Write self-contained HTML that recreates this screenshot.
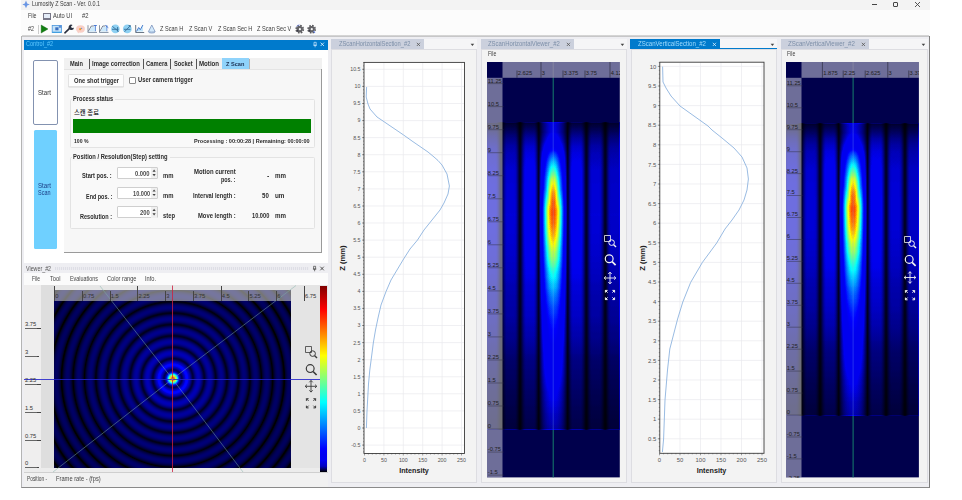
<!DOCTYPE html><html><head><meta charset="utf-8"><title>Lumosity Z Scan</title><style>
*{box-sizing:border-box;margin:0;padding:0}
html,body{width:962px;height:500px;overflow:hidden;background:#fff}
body{font-family:"Liberation Sans","Noto Sans CJK KR",sans-serif;font-size:6px;color:#222;position:relative}
.a{position:absolute}
.t{position:absolute;white-space:nowrap;line-height:1}
svg{position:absolute;overflow:visible}
#win{position:absolute;left:21px;top:0;width:909px;height:487.800px;background:#eeeef2;border-left:1px solid #b4b4b4;border-right:1px solid #7c7c7c;border-bottom:1px solid #8a8a8a}
</style></head><body>
<div id="win"></div>
<div class="a" style="left:21px;top:0px;width:909px;height:10px;background:#f3f3f3;"></div>
<div class="a" style="left:21px;top:10px;width:909px;height:26px;background:#fcfcfc;"></div>
<div class="a" style="left:22px;top:35.3px;width:907px;height:1.8px;background:linear-gradient(180deg,#e6e6e6,#bcbcbc 60%,#d8d8dc);"></div>
<svg style="left:22px;top:0" width="8" height="9" viewBox="0 0 8 9"><path d="M4 .6 5.2 3.4 7.8 4.6 5.2 5.6 4 8.2 2.8 5.6 .3 4.6 2.8 3.4Z" fill="#6a96e4"/></svg>
<div class="t" style="font-size:6.9px;color:#3a3a3a;left:31.50px;top:1.15px;transform-origin:0 50%;transform:scaleX(0.785);">Lumosity Z Scan - Ver. 0.0.1</div>
<div class="t" style="font-size:6.9px;color:#3a3a3a;left:27.50px;top:12.75px;transform-origin:0 50%;transform:scaleX(0.764);">File</div>
<div class="t" style="font-size:6.9px;color:#3a3a3a;left:53.00px;top:12.75px;transform-origin:0 50%;transform:scaleX(0.826);">Auto UI</div>
<div class="t" style="font-size:6.9px;color:#3a3a3a;left:82.00px;top:12.75px;transform-origin:0 50%;transform:scaleX(0.847);">#2</div>
<div class="a" style="left:43px;top:12.5px;width:8px;height:7px;border:1px solid #778;background:#e4ecf8;border-bottom-width:2px"></div>
<div class="t" style="font-size:6.9px;color:#3a3a3a;left:27.70px;top:25.55px;transform-origin:0 50%;transform:scaleX(0.782);">#2</div>
<div class="a" style="left:37.5px;top:24.5px;width:0.6px;height:9px;background:#ccc;"></div>
<div class="t" style="font-size:6.9px;color:#3a3a3a;left:159.70px;top:25.55px;transform-origin:0 50%;transform:scaleX(0.810);">Z Scan H</div>
<div class="t" style="font-size:6.9px;color:#3a3a3a;left:188.70px;top:25.55px;transform-origin:0 50%;transform:scaleX(0.818);">Z Scan V</div>
<div class="t" style="font-size:6.9px;color:#3a3a3a;left:217.50px;top:25.55px;transform-origin:0 50%;transform:scaleX(0.808);">Z Scan Sec H</div>
<div class="t" style="font-size:6.9px;color:#3a3a3a;left:256.90px;top:25.55px;transform-origin:0 50%;transform:scaleX(0.813);">Z Scan Sec V</div>
<svg style="left:40px;top:24px" width="120" height="10" viewBox="40 24 120 10"><path d="M41.200 25 48 29 41.200 33Z" fill="#118011" stroke="#0a5a0a" stroke-width="0.400"/><rect x="52.200" y="25.500" width="9.300" height="7" fill="#c4e2f8" stroke="#4a96dc" stroke-width="0.800"/><path d="M52.200 32.300h9.300" stroke="#3f9fe0" stroke-width="1.200"/><rect x="55.300" y="27.300" width="3.200" height="3" fill="#3a6fc0"/><rect x="58.800" y="25.200" width="2.600" height="2.600" fill="#5a8fd8"/><path d="M64.900 32.800 69.300 28.600" stroke="#2a3040" stroke-width="1.600" stroke-linecap="round"/><path d="M72.600 24.900 a2.700 2.700 0 1 0 1.400 2.800 l-2.200 .3 -.8 -1.600z" fill="#2a3040"/><ellipse cx="80.500" cy="29" rx="4.400" ry="3.700" fill="#f9cfc6"/><circle cx="80.200" cy="29.200" r="1.100" fill="#f0a030"/><circle cx="81.600" cy="28.300" r="0.600" fill="#5a8fe0"/><path d="M78 32.200l.6 1" stroke="#f4b0a4" stroke-width="0.700"/><path d="M88.300 31.400 91.300 26h2.500" stroke="#56657c" stroke-width="0.800" fill="none"/><path d="M87.600 32.400h9.400" stroke="#8090a4" stroke-width="1"/><path d="M88 25.200v6.800" stroke="#56657c" stroke-width="0.700"/><path d="M95.300 25.300v6M93.800 25.500h3" stroke="#3a6fd0" stroke-width="0.900"/><path d="M89 31.500 91.600 27h3.200v4.500z" fill="#bfe4fa" opacity=".8"/><path d="M99.800 31.400 102.800 26h2.500" stroke="#56657c" stroke-width="0.800" fill="none"/><path d="M99.100 32.400h9.400" stroke="#8090a4" stroke-width="1"/><path d="M99.500 25.200v6.800" stroke="#56657c" stroke-width="0.700"/><path d="M106.800 25.300v6M105.300 25.300l3 2.400" stroke="#3a6fd0" stroke-width="0.900"/><path d="M100.500 31.500 103.100 27h3.200v4.500z" fill="#bfe4fa" opacity=".8"/><circle cx="115.400" cy="28.900" r="4.300" fill="#8ed0f2"/><path d="M112.300 26.300l6.300 5.200M112 29.300h6.500M117.600 27v4.600" stroke="#35709c" stroke-width="0.900" fill="none"/><circle cx="127.300" cy="28.900" r="4.400" fill="#8ed0f2"/><path d="M124.500 31.800l5.800-6.200M124 29.300h6.500M128.500 25.500l1.800 .1-.1 1.800" stroke="#35709c" stroke-width="0.900" fill="none"/><path d="M135.700 25v7.500h8.500" stroke="#5a6878" stroke-width="0.900" fill="none"/><path d="M136.500 31.500l2.200-4 1.600 2.200 2.600-4.700v6.500z" fill="#bfe4fa"/><path d="M136.500 31.500l2.200-4 1.600 2.200 2.600-4.700" stroke="#3a70c8" stroke-width="0.900" fill="none"/><path d="M151.800 25 155.200 31.800a3.400 1.200 0 0 1-6.800 0z" fill="#d2e9fb" stroke="#7088b4" stroke-width="0.700"/><path d="M148.600 31.200a3.300 1 0 0 0 6.400 0" stroke="#7088b4" stroke-width="0.500" fill="none"/></svg>
<svg style="left:294px;top:24px" width="24" height="10" viewBox="294 24 24 10"><circle cx="299.700" cy="29.200" r="3.500" fill="none" stroke="#5a5a5e" stroke-width="1.800" stroke-dasharray="1.600 1.150"/><circle cx="299.700" cy="29.200" r="3.100" fill="#626266"/><circle cx="299.900" cy="29.200" r="1.100" fill="#f4f4f4"/><circle cx="297.600" cy="31" r="0.700" fill="#223"/><path d="M296.300 26.600l1.600-1.300 1.800-.3" stroke="#6a7fd8" stroke-width="0.800" fill="none"/><circle cx="311.600" cy="29.200" r="3.500" fill="none" stroke="#5a5a5e" stroke-width="1.800" stroke-dasharray="1.600 1.150"/><circle cx="311.600" cy="29.200" r="3.100" fill="#626266"/><circle cx="311.800" cy="29.200" r="1.100" fill="#f4f4f4"/><circle cx="309.500" cy="31" r="0.700" fill="#223"/><path d="M313.600 31l1.200 1.800" stroke="#6a86e0" stroke-width="1.200"/></svg>
<div class="a" style="left:872px;top:4px;width:5px;height:0.9px;background:#444;"></div>
<div class="a" style="left:893px;top:1.5px;width:5px;height:5px;border:0.9px solid #444;border-radius:1px"></div>
<svg style="left:914px;top:1px" width="7" height="7"><path d="M1 1 6 6M6 1 1 6" stroke="#444" stroke-width="0.9"/></svg>
<div class="a" style="left:24px;top:39.5px;width:303.5px;height:223px;background:#ffffff;"></div>
<div class="a" style="left:24px;top:39.5px;width:303.5px;height:10.2px;background:#007acc;"></div>
<div class="t" style="font-size:6.6px;color:#5cc8ff;left:26.40px;top:41.30px;transform-origin:0 50%;transform:scaleX(0.842);">Control_#2</div>
<svg style="left:312px;top:41px" width="14" height="8" viewBox="312 41 14 8"><path d="M314 42.300h2.200v3h-2.200zM313.400 45.300h3.400M315.100 45.300v2" stroke="#cfeaff" stroke-width="0.700" fill="none"/><path d="M320.600 42.600 324 46M324 42.600 320.600 46" stroke="#e8f6ff" stroke-width="0.800"/></svg>
<div class="a" style="left:33px;top:59.500px;width:25px;height:65px;background:#fff;border:1px solid #8392b0;border-radius:2px"></div>
<div class="t" style="font-size:6.8px;color:#333;left:38.20px;top:90.40px;transform-origin:0 50%;transform:scaleX(0.898);">Start</div>
<div class="a" style="left:33.500px;top:130px;width:23.500px;height:118.800px;background:#6fd0ff;border-radius:1.500px"></div>
<div class="t" style="font-size:6.8px;color:#1c3f86;left:38.00px;top:182.60px;transform-origin:0 50%;transform:scaleX(0.905);">Start</div>
<div class="t" style="font-size:6.8px;color:#1c3f86;left:38.00px;top:190.10px;transform-origin:0 50%;transform:scaleX(0.806);">Scan</div>
<div class="a" style="left:64px;top:58px;width:257.5px;height:194px;background:#f7f7f7;"></div>
<div class="a" style="left:64px;top:58px;width:257.5px;height:11px;background:#f1f1f1;"></div>
<div class="a" style="left:321px;top:69px;width:1px;height:183.5px;background:#9a9a9a;"></div>
<div class="a" style="left:64px;top:251.5px;width:258px;height:1px;background:#9a9a9a;"></div>
<div class="a" style="left:64px;top:69px;width:257px;height:0.6px;background:#e4e4e4;"></div>
<div class="t" style="font-size:6.3px;color:#2b2b2b;font-weight:bold;left:70.00px;top:60.65px;transform-origin:0 50%;transform:scaleX(0.899);">Main</div>
<div class="t" style="font-size:6.3px;color:#2b2b2b;font-weight:bold;left:92.20px;top:60.65px;transform-origin:0 50%;transform:scaleX(0.942);">Image correction</div>
<div class="t" style="font-size:6.3px;color:#2b2b2b;font-weight:bold;left:146.30px;top:60.65px;transform-origin:0 50%;transform:scaleX(0.926);">Camera</div>
<div class="t" style="font-size:6.3px;color:#2b2b2b;font-weight:bold;left:173.70px;top:60.65px;transform-origin:0 50%;transform:scaleX(0.905);">Socket</div>
<div class="t" style="font-size:6.3px;color:#2b2b2b;font-weight:bold;left:198.90px;top:60.65px;transform-origin:0 50%;transform:scaleX(0.974);">Motion</div>
<div class="a" style="left:88.8px;top:59px;width:0.8px;height:9.5px;background:#555;"></div>
<div class="a" style="left:143.29999999999998px;top:59px;width:0.8px;height:9.5px;background:#555;"></div>
<div class="a" style="left:170.29999999999998px;top:59px;width:0.8px;height:9.5px;background:#555;"></div>
<div class="a" style="left:195.89999999999998px;top:59px;width:0.8px;height:9.5px;background:#555;"></div>
<div class="a" style="left:222.2px;top:57.8px;width:27px;height:11.5px;background:#8fd3fb;"></div>
<div class="a" style="left:249.2px;top:58.5px;width:0.8px;height:10.5px;background:#b0b0b0;"></div>
<div class="t" style="font-size:6.0px;color:#1b2f52;font-weight:bold;left:225.70px;top:60.90px;transform-origin:0 50%;transform:scaleX(0.930);">Z Scan</div>
<div class="a" style="left:68.300px;top:73.800px;width:56.100px;height:13.500px;background:#fdfdfd;border:0.7px solid #e2e2e2;border-radius:1.500px;box-shadow:0 0.500px 0.500px #d8d8d8"></div>
<div class="t" style="font-size:6.3px;color:#2b2b2b;font-weight:bold;left:73.50px;top:77.65px;transform-origin:0 50%;transform:scaleX(0.920);">One shot trigger</div>
<div class="a" style="left:129.300px;top:77.400px;width:6.300px;height:6.300px;background:#fff;border:0.7px solid #8a8a8a;border-radius:1px"></div>
<div class="t" style="font-size:6.3px;color:#2b2b2b;font-weight:bold;left:138.00px;top:77.45px;transform-origin:0 50%;transform:scaleX(0.924);">User camera trigger</div>
<div class="a" style="left:69.500px;top:99px;width:245px;height:49px;border:0.7px solid #e3e3e3;border-radius:1.500px;background:#f9f9f9"></div>
<div class="a" style="left:72px;top:95px;width:43px;height:8px;background:#f7f7f7;"></div>
<div class="t" style="font-size:6.3px;color:#2b2b2b;font-weight:bold;left:73.40px;top:95.85px;transform-origin:0 50%;transform:scaleX(0.895);">Process status</div>
<div class="t" style="font-size:6.3px;color:#111;left:74.00px;top:109.55px;font-weight:500;">스캔 종료</div>
<div class="a" style="left:73.4px;top:119.2px;width:238.1px;height:14px;background:#008000;"></div>
<div class="t" style="font-size:6.2px;color:#2b2b2b;font-weight:bold;left:74.00px;top:137.50px;transform-origin:0 50%;transform:scaleX(0.825);">100 %</div>
<div class="t" style="font-size:6.2px;color:#2b2b2b;font-weight:bold;left:193.90px;top:137.50px;transform-origin:0 50%;transform:scaleX(0.897);">Processing : 00:00:28 | Remaining: 00:00:00</div>
<div class="a" style="left:69.500px;top:156.500px;width:245px;height:72px;border:0.7px solid #e3e3e3;border-radius:1.500px;background:#f9f9f9"></div>
<div class="a" style="left:72px;top:152.5px;width:98px;height:8px;background:#f7f7f7;"></div>
<div class="t" style="font-size:6.3px;color:#2b2b2b;font-weight:bold;left:73.40px;top:154.05px;transform-origin:0 50%;transform:scaleX(0.919);">Position / Resolution(Step) setting</div>
<div class="a" style="left:117px;top:167.2px;width:41px;height:11.7px;background:#fff;border:0.7px solid #cfcfcf;border-radius:1px"></div>
<div class="a" style="left:151px;top:167.89999999999998px;width:6.300px;height:10.3px;background:#f0f0f0"></div>
<div class="t" style="font-size:7.0px;color:#4a4a4a;font-weight:bold;left:135.10px;top:169.75px;transform-origin:0 50%;transform:scaleX(0.833);">0.000</div>
<svg style="left:151px;top:167.2px" width="6" height="11.7" viewBox="0 0 6 11.500"><path d="M1.500 4.600 3.100 2.400 4.700 4.600zM1.500 6.900 3.100 9.100 4.700 6.900z" fill="#444"/></svg>
<div class="a" style="left:117px;top:187.3px;width:41px;height:11.5px;background:#fff;border:0.7px solid #cfcfcf;border-radius:1px"></div>
<div class="a" style="left:151px;top:188.0px;width:6.300px;height:10.1px;background:#f0f0f0"></div>
<div class="t" style="font-size:7.0px;color:#4a4a4a;font-weight:bold;left:132.50px;top:189.75px;transform-origin:0 50%;transform:scaleX(0.803);">10.000</div>
<svg style="left:151px;top:187.3px" width="6" height="11.5" viewBox="0 0 6 11.500"><path d="M1.500 4.600 3.100 2.400 4.700 4.600zM1.500 6.900 3.100 9.100 4.700 6.900z" fill="#444"/></svg>
<div class="a" style="left:117px;top:206.4px;width:41px;height:12.1px;background:#fff;border:0.7px solid #cfcfcf;border-radius:1px"></div>
<div class="a" style="left:151px;top:207.1px;width:6.300px;height:10.7px;background:#f0f0f0"></div>
<div class="t" style="font-size:7.0px;color:#4a4a4a;font-weight:bold;left:140.00px;top:209.15px;transform-origin:0 50%;transform:scaleX(0.831);">200</div>
<svg style="left:151px;top:206.4px" width="6" height="12.1" viewBox="0 0 6 11.500"><path d="M1.500 4.600 3.100 2.400 4.700 4.600zM1.500 6.900 3.100 9.100 4.700 6.900z" fill="#444"/></svg>
<div class="t" style="font-size:6.3px;color:#2b2b2b;font-weight:bold;left:82.30px;top:173.15px;transform-origin:0 50%;transform:scaleX(0.903);">Start pos. :</div>
<div class="t" style="font-size:6.3px;color:#2b2b2b;font-weight:bold;left:85.70px;top:193.55px;transform-origin:0 50%;transform:scaleX(0.864);">End pos. :</div>
<div class="t" style="font-size:6.3px;color:#2b2b2b;font-weight:bold;left:80.00px;top:213.75px;transform-origin:0 50%;transform:scaleX(0.879);">Resolution :</div>
<div class="t" style="font-size:6.3px;color:#2b2b2b;font-weight:bold;left:163.00px;top:172.65px;transform-origin:0 50%;transform:scaleX(0.937);">mm</div>
<div class="t" style="font-size:6.3px;color:#2b2b2b;font-weight:bold;left:163.00px;top:193.05px;transform-origin:0 50%;transform:scaleX(0.937);">mm</div>
<div class="t" style="font-size:6.3px;color:#2b2b2b;font-weight:bold;left:163.00px;top:213.35px;transform-origin:0 50%;transform:scaleX(0.926);">step</div>
<div class="t" style="font-size:6.3px;color:#2b2b2b;font-weight:bold;left:193.50px;top:168.65px;transform-origin:0 50%;transform:scaleX(0.946);">Motion current</div>
<div class="t" style="font-size:6.3px;color:#2b2b2b;font-weight:bold;left:220.80px;top:176.65px;transform-origin:0 50%;transform:scaleX(0.857);">pos. :</div>
<div class="t" style="font-size:6.3px;color:#2b2b2b;font-weight:bold;left:192.50px;top:192.85px;transform-origin:0 50%;transform:scaleX(0.910);">Interval length :</div>
<div class="t" style="font-size:6.3px;color:#2b2b2b;font-weight:bold;left:197.50px;top:213.05px;transform-origin:0 50%;transform:scaleX(0.929);">Move length :</div>
<div class="t" style="font-size:6.3px;color:#2b2b2b;font-weight:bold;left:266.50px;top:172.75px;transform-origin:0 50%;transform:scaleX(1.096);">-</div>
<div class="t" style="font-size:6.3px;color:#2b2b2b;font-weight:bold;left:262.00px;top:192.85px;transform-origin:0 50%;transform:scaleX(0.970);">50</div>
<div class="t" style="font-size:6.3px;color:#2b2b2b;font-weight:bold;left:251.50px;top:213.05px;transform-origin:0 50%;transform:scaleX(0.898);">10.000</div>
<div class="t" style="font-size:6.3px;color:#2b2b2b;font-weight:bold;left:275.00px;top:172.75px;transform-origin:0 50%;transform:scaleX(0.982);">mm</div>
<div class="t" style="font-size:6.3px;color:#2b2b2b;font-weight:bold;left:275.00px;top:192.85px;transform-origin:0 50%;transform:scaleX(1.005);">um</div>
<div class="t" style="font-size:6.3px;color:#2b2b2b;font-weight:bold;left:275.00px;top:213.05px;transform-origin:0 50%;transform:scaleX(0.982);">mm</div>
<div class="a" style="left:24px;top:263.5px;width:303.5px;height:223px;background:#f0f0f0;"></div>
<div class="a" style="left:24px;top:263.5px;width:303.5px;height:10px;background:#eeeef2;"></div>
<div class="t" style="font-size:6.5px;color:#555;left:26.40px;top:265.55px;transform-origin:0 50%;transform:scaleX(0.820);">Viewer_#2</div>
<div class="a" style="left:55px;top:266.8px;width:254px;height:3.6px;background:repeating-linear-gradient(90deg,#dedee6 0 1px,#ececf0 1px 2px);"></div>
<svg style="left:312px;top:265px" width="14" height="8" viewBox="312 265 14 8"><path d="M313.600 266.300h2v2.800h-2zM312.900 269.100h3.400M314.600 269.100v2.200" stroke="#444" stroke-width="0.700" fill="none"/><path d="M320.300 266.700 323.800 270.300M323.800 266.700 320.300 270.300" stroke="#333" stroke-width="0.800"/></svg>
<div class="a" style="left:24px;top:273px;width:303.5px;height:12.3px;background:#fbfbfb;"></div>
<div class="t" style="font-size:6.3px;color:#444;left:32.00px;top:275.85px;transform-origin:0 50%;transform:scaleX(0.788);">File</div>
<div class="t" style="font-size:6.3px;color:#444;left:50.00px;top:275.85px;transform-origin:0 50%;transform:scaleX(0.908);">Tool</div>
<div class="t" style="font-size:6.3px;color:#444;left:69.60px;top:275.85px;transform-origin:0 50%;transform:scaleX(0.857);">Evaluations</div>
<div class="t" style="font-size:6.3px;color:#444;left:107.00px;top:275.85px;transform-origin:0 50%;transform:scaleX(0.896);">Color range</div>
<div class="t" style="font-size:6.3px;color:#444;left:145.00px;top:275.85px;transform-origin:0 50%;transform:scaleX(0.897);">Info.</div>
<div class="a" style="left:24px;top:285.3px;width:303.5px;height:187px;background:#e6e6e6;"></div>
<div class="a" style="left:24px;top:285.3px;width:17px;height:187px;background:#efeeee;"></div>
<div class="a" style="left:41px;top:285.3px;width:12.6px;height:187px;background:#dedede;"></div>
<div class="a" style="left:291px;top:285.3px;width:28.6px;height:187px;background:#e4e4e4;"></div>
<div class="a" style="left:24px;top:468px;width:303.5px;height:4.4px;background:#ececec;"></div>
<div class="a" style="left:24px;top:472.4px;width:303.5px;height:14.6px;background:#f1f1f1;"></div>
<div class="a" style="left:24px;top:472.2px;width:303.5px;height:0.6px;background:#cfcfcf;"></div>
<div class="t" style="font-size:6.3px;color:#444;left:26.60px;top:475.85px;transform-origin:0 50%;transform:scaleX(0.765);">Position -</div>
<div class="t" style="font-size:6.3px;color:#444;left:56.00px;top:475.85px;transform-origin:0 50%;transform:scaleX(0.912);">Frame rate - (fps)</div>
<div class="a" style="left:331px;top:39.2px;width:146.2px;height:9.6px;background:#f5f5f7;"></div>
<div class="a" style="left:331px;top:48.8px;width:146.2px;height:434.5px;background:#f3f3f3;border:0.6px solid #dddde2;"></div>
<div class="a" style="left:331px;top:39.2px;width:93px;height:9.6px;background:#cbd0dd;"></div>
<div class="t" style="font-size:6.4px;color:#7d8fa8;left:338.50px;top:41.00px;transform-origin:0 50%;transform:scaleX(0.901);">ZScanHorizontalSection_#2</div>
<svg style="left:416px;top:42px" width="5" height="5"><path d="M.8 .8 4 4M4 .8 .8 4" stroke="#555" stroke-width="0.800"/></svg>
<svg style="left:470.2px;top:43px" width="5" height="4"><path d="M.6 .8h3.600L2.400 3z" fill="#444"/></svg>
<div class="a" style="left:480.6px;top:39.2px;width:146.39999999999998px;height:9.6px;background:#f5f5f7;"></div>
<div class="a" style="left:480.6px;top:48.8px;width:146.39999999999998px;height:434.5px;background:#f3f3f3;border:0.6px solid #dddde2;"></div>
<div class="a" style="left:480.6px;top:39.2px;width:93.39999999999998px;height:9.6px;background:#cbd0dd;"></div>
<div class="t" style="font-size:6.4px;color:#7d8fa8;left:488.10px;top:41.00px;transform-origin:0 50%;transform:scaleX(0.928);">ZScanHorizontalViewer_#2</div>
<svg style="left:566px;top:42px" width="5" height="5"><path d="M.8 .8 4 4M4 .8 .8 4" stroke="#555" stroke-width="0.800"/></svg>
<svg style="left:620px;top:43px" width="5" height="4"><path d="M.6 .8h3.600L2.400 3z" fill="#444"/></svg>
<div class="a" style="left:630.5px;top:39.2px;width:146.5px;height:9.6px;background:#f5f5f7;"></div>
<div class="a" style="left:630.5px;top:48.8px;width:146.5px;height:434.5px;background:#f3f3f3;border:0.6px solid #dddde2;"></div>
<div class="a" style="left:630.0px;top:39px;width:90px;height:9.8px;background:#007acc;"></div>
<div class="a" style="left:630.5px;top:48.2px;width:146.5px;height:1.2px;background:#007acc;"></div>
<div class="t" style="font-size:6.4px;color:#9fdcff;left:638.00px;top:41.00px;transform-origin:0 50%;transform:scaleX(0.951);">ZScanVerticalSection_#2</div>
<svg style="left:712px;top:42px" width="5" height="5"><path d="M.8 .8 4 4M4 .8 .8 4" stroke="#d8f0ff" stroke-width="0.800"/></svg>
<svg style="left:770px;top:43px" width="5" height="4"><path d="M.6 .8h3.600L2.400 3z" fill="#444"/></svg>
<div class="a" style="left:780.5px;top:39.2px;width:147.0px;height:9.6px;background:#f5f5f7;"></div>
<div class="a" style="left:780.5px;top:48.8px;width:147.0px;height:434.5px;background:#f3f3f3;border:0.6px solid #dddde2;"></div>
<div class="a" style="left:780.5px;top:39.2px;width:88.5px;height:9.6px;background:#cbd0dd;"></div>
<div class="t" style="font-size:6.4px;color:#7d8fa8;left:788.00px;top:41.00px;transform-origin:0 50%;transform:scaleX(0.962);">ZScanVerticalViewer_#2</div>
<svg style="left:861px;top:42px" width="5" height="5"><path d="M.8 .8 4 4M4 .8 .8 4" stroke="#555" stroke-width="0.800"/></svg>
<svg style="left:920.5px;top:43px" width="5" height="4"><path d="M.6 .8h3.600L2.400 3z" fill="#444"/></svg>
<svg style="left:0;top:0" width="962" height="500" viewBox="0 0 962 500"><rect x="364" y="62.4" width="100.5" height="391.1" fill="#fff"/><path d="M383.9 62.4V453.5M403.3 62.4V453.5M422.7 62.4V453.5M442.1 62.4V453.5M461.5 62.4V453.5M364 445.1H464.5M364 428.0H464.5M364 410.9H464.5M364 393.8H464.5M364 376.8H464.5M364 359.7H464.5M364 342.6H464.5M364 325.5H464.5M364 308.4H464.5M364 291.4H464.5M364 274.3H464.5M364 257.2H464.5M364 240.1H464.5M364 223.0H464.5M364 206.0H464.5M364 188.9H464.5M364 171.8H464.5M364 154.7H464.5M364 137.6H464.5M364 120.6H464.5M364 103.5H464.5M364 86.4H464.5M364 69.3H464.5" stroke="#e9e9ee" stroke-width="0.700" fill="none"/><path d="M362 445.1H364M362 428.0H364M362 410.9H364M362 393.8H364M362 376.8H364M362 359.7H364M362 342.6H364M362 325.5H364M362 308.4H364M362 291.4H364M362 274.3H364M362 257.2H364M362 240.1H364M362 223.0H364M362 206.0H364M362 188.9H364M362 171.8H364M362 154.7H364M362 137.6H364M362 120.6H364M362 103.5H364M362 86.4H364M362 69.3H364M363 451.9H364M363 448.5H364M363 445.1H364M363 441.7H364M363 438.2H364M363 434.8H364M363 431.4H364M363 428.0H364M363 424.6H364M363 421.2H364M363 417.8H364M363 414.3H364M363 410.9H364M363 407.5H364M363 404.1H364M363 400.7H364M363 397.3H364M363 393.8H364M363 390.4H364M363 387.0H364M363 383.6H364M363 380.2H364M363 376.8H364M363 373.3H364M363 369.9H364M363 366.5H364M363 363.1H364M363 359.7H364M363 356.3H364M363 352.8H364M363 349.4H364M363 346.0H364M363 342.6H364M363 339.2H364M363 335.8H364M363 332.4H364M363 328.9H364M363 325.5H364M363 322.1H364M363 318.7H364M363 315.3H364M363 311.9H364M363 308.4H364M363 305.0H364M363 301.6H364M363 298.2H364M363 294.8H364M363 291.4H364M363 287.9H364M363 284.5H364M363 281.1H364M363 277.7H364M363 274.3H364M363 270.9H364M363 267.4H364M363 264.0H364M363 260.6H364M363 257.2H364M363 253.8H364M363 250.4H364M363 247.0H364M363 243.5H364M363 240.1H364M363 236.7H364M363 233.3H364M363 229.9H364M363 226.5H364M363 223.0H364M363 219.6H364M363 216.2H364M363 212.8H364M363 209.4H364M363 206.0H364M363 202.5H364M363 199.1H364M363 195.7H364M363 192.3H364M363 188.9H364M363 185.5H364M363 182.0H364M363 178.6H364M363 175.2H364M363 171.8H364M363 168.4H364M363 165.0H364M363 161.6H364M363 158.1H364M363 154.7H364M363 151.3H364M363 147.9H364M363 144.5H364M363 141.1H364M363 137.6H364M363 134.2H364M363 130.8H364M363 127.4H364M363 124.0H364M363 120.6H364M363 117.1H364M363 113.7H364M363 110.3H364M363 106.9H364M363 103.5H364M363 100.1H364M363 96.6H364M363 93.2H364M363 89.8H364M363 86.4H364M363 83.0H364M363 79.6H364M363 76.2H364M363 72.7H364M363 69.3H364M363 65.9H364M363 62.5H364M364.5 453.5v2M368.4 453.5v1M372.3 453.5v1M376.1 453.5v1M380.0 453.5v1M383.9 453.5v2M387.8 453.5v1M391.7 453.5v1M395.5 453.5v1M399.4 453.5v1M403.3 453.5v2M407.2 453.5v1M411.1 453.5v1M414.9 453.5v1M418.8 453.5v1M422.7 453.5v2M426.6 453.5v1M430.5 453.5v1M434.3 453.5v1M438.2 453.5v1M442.1 453.5v2M446.0 453.5v1M449.9 453.5v1M453.7 453.5v1M457.6 453.5v1M461.5 453.5v2" stroke="#444" stroke-width="0.500" fill="none"/><rect x="364" y="62.4" width="100.5" height="391.1" fill="none" stroke="#3a3a3a" stroke-width="0.900"/><polyline points="366.6,87.0 366.2,97.0 368.0,104.0 370.0,109.0 377.0,117.0 383.0,121.0 403.6,135.0 412.0,141.0 428.0,152.0 434.0,157.0 438.0,160.5 442.0,165.0 447.0,174.0 449.4,186.0 448.0,194.0 444.0,203.0 440.0,210.0 432.0,220.0 424.0,230.0 417.5,240.0 410.0,249.0 403.6,259.0 391.0,280.0 386.0,291.6 381.0,305.0 378.0,318.0 375.5,330.0 373.3,343.0 371.5,357.0 369.8,370.0 368.5,384.0 367.0,411.0 366.4,428.0" fill="none" stroke="#7fa9da" stroke-width="0.800" stroke-linejoin="round"/><text x="360.5" y="446.9" text-anchor="end" style="font-family:'Liberation Sans',sans-serif;font-size:5.3px;fill:#555">-0.5</text><text x="360.5" y="429.9" text-anchor="end" style="font-family:'Liberation Sans',sans-serif;font-size:5.3px;fill:#555">0</text><text x="360.5" y="412.8" text-anchor="end" style="font-family:'Liberation Sans',sans-serif;font-size:5.3px;fill:#555">0.5</text><text x="360.5" y="395.7" text-anchor="end" style="font-family:'Liberation Sans',sans-serif;font-size:5.3px;fill:#555">1</text><text x="360.5" y="378.6" text-anchor="end" style="font-family:'Liberation Sans',sans-serif;font-size:5.3px;fill:#555">1.5</text><text x="360.5" y="361.5" text-anchor="end" style="font-family:'Liberation Sans',sans-serif;font-size:5.3px;fill:#555">2</text><text x="360.5" y="344.5" text-anchor="end" style="font-family:'Liberation Sans',sans-serif;font-size:5.3px;fill:#555">2.5</text><text x="360.5" y="327.4" text-anchor="end" style="font-family:'Liberation Sans',sans-serif;font-size:5.3px;fill:#555">3</text><text x="360.5" y="310.3" text-anchor="end" style="font-family:'Liberation Sans',sans-serif;font-size:5.3px;fill:#555">3.5</text><text x="360.5" y="293.2" text-anchor="end" style="font-family:'Liberation Sans',sans-serif;font-size:5.3px;fill:#555">4</text><text x="360.5" y="276.1" text-anchor="end" style="font-family:'Liberation Sans',sans-serif;font-size:5.3px;fill:#555">4.5</text><text x="360.5" y="259.1" text-anchor="end" style="font-family:'Liberation Sans',sans-serif;font-size:5.3px;fill:#555">5</text><text x="360.5" y="242.0" text-anchor="end" style="font-family:'Liberation Sans',sans-serif;font-size:5.3px;fill:#555">5.5</text><text x="360.5" y="224.9" text-anchor="end" style="font-family:'Liberation Sans',sans-serif;font-size:5.3px;fill:#555">6</text><text x="360.5" y="207.8" text-anchor="end" style="font-family:'Liberation Sans',sans-serif;font-size:5.3px;fill:#555">6.5</text><text x="360.5" y="190.7" text-anchor="end" style="font-family:'Liberation Sans',sans-serif;font-size:5.3px;fill:#555">7</text><text x="360.5" y="173.7" text-anchor="end" style="font-family:'Liberation Sans',sans-serif;font-size:5.3px;fill:#555">7.5</text><text x="360.5" y="156.6" text-anchor="end" style="font-family:'Liberation Sans',sans-serif;font-size:5.3px;fill:#555">8</text><text x="360.5" y="139.5" text-anchor="end" style="font-family:'Liberation Sans',sans-serif;font-size:5.3px;fill:#555">8.5</text><text x="360.5" y="122.4" text-anchor="end" style="font-family:'Liberation Sans',sans-serif;font-size:5.3px;fill:#555">9</text><text x="360.5" y="105.3" text-anchor="end" style="font-family:'Liberation Sans',sans-serif;font-size:5.3px;fill:#555">9.5</text><text x="360.5" y="88.3" text-anchor="end" style="font-family:'Liberation Sans',sans-serif;font-size:5.3px;fill:#555">10</text><text x="360.5" y="71.2" text-anchor="end" style="font-family:'Liberation Sans',sans-serif;font-size:5.3px;fill:#555">10.5</text><text x="364.5" y="461.8" text-anchor="middle" style="font-family:'Liberation Sans',sans-serif;font-size:5.3px;fill:#555">0</text><text x="383.9" y="461.8" text-anchor="middle" style="font-family:'Liberation Sans',sans-serif;font-size:5.3px;fill:#555">50</text><text x="403.3" y="461.8" text-anchor="middle" style="font-family:'Liberation Sans',sans-serif;font-size:5.3px;fill:#555">100</text><text x="422.7" y="461.8" text-anchor="middle" style="font-family:'Liberation Sans',sans-serif;font-size:5.3px;fill:#555">150</text><text x="442.1" y="461.8" text-anchor="middle" style="font-family:'Liberation Sans',sans-serif;font-size:5.3px;fill:#555">200</text><text x="461.5" y="461.8" text-anchor="middle" style="font-family:'Liberation Sans',sans-serif;font-size:5.3px;fill:#555">250</text><text x="414" y="472.7" text-anchor="middle" style="font-family:'Liberation Sans',sans-serif;font-size:7.200px;font-weight:bold;fill:#222">Intensity</text><text transform="translate(345.3 258) rotate(-90)" text-anchor="middle" style="font-family:'Liberation Sans',sans-serif;font-size:7.600px;font-weight:bold;fill:#222">Z (mm)</text></svg>
<svg style="left:0;top:0" width="962" height="500" viewBox="0 0 962 500"><rect x="659.8" y="62.2" width="104.20000000000005" height="391.1" fill="#fff"/><path d="M680.0 62.2V453.3M700.5 62.2V453.3M721.0 62.2V453.3M741.5 62.2V453.3M762.0 62.2V453.3M659.8 438.8H764M659.8 419.2H764M659.8 399.6H764M659.8 380.0H764M659.8 360.4H764M659.8 340.8H764M659.8 321.2H764M659.8 301.6H764M659.8 282.0H764M659.8 262.4H764M659.8 242.8H764M659.8 223.2H764M659.8 203.6H764M659.8 184.0H764M659.8 164.4H764M659.8 144.8H764M659.8 125.2H764M659.8 105.6H764M659.8 86.0H764M659.8 66.4H764" stroke="#e9e9ee" stroke-width="0.700" fill="none"/><path d="M657.8 438.8H659.8M657.8 419.2H659.8M657.8 399.6H659.8M657.8 380.0H659.8M657.8 360.4H659.8M657.8 340.8H659.8M657.8 321.2H659.8M657.8 301.6H659.8M657.8 282.0H659.8M657.8 262.4H659.8M657.8 242.8H659.8M657.8 223.2H659.8M657.8 203.6H659.8M657.8 184.0H659.8M657.8 164.4H659.8M657.8 144.8H659.8M657.8 125.2H659.8M657.8 105.6H659.8M657.8 86.0H659.8M657.8 66.4H659.8M658.8 450.6H659.8M658.8 446.6H659.8M658.8 442.7H659.8M658.8 438.8H659.8M658.8 434.9H659.8M658.8 431.0H659.8M658.8 427.0H659.8M658.8 423.1H659.8M658.8 419.2H659.8M658.8 415.3H659.8M658.8 411.4H659.8M658.8 407.4H659.8M658.8 403.5H659.8M658.8 399.6H659.8M658.8 395.7H659.8M658.8 391.8H659.8M658.8 387.8H659.8M658.8 383.9H659.8M658.8 380.0H659.8M658.8 376.1H659.8M658.8 372.2H659.8M658.8 368.2H659.8M658.8 364.3H659.8M658.8 360.4H659.8M658.8 356.5H659.8M658.8 352.6H659.8M658.8 348.6H659.8M658.8 344.7H659.8M658.8 340.8H659.8M658.8 336.9H659.8M658.8 333.0H659.8M658.8 329.0H659.8M658.8 325.1H659.8M658.8 321.2H659.8M658.8 317.3H659.8M658.8 313.4H659.8M658.8 309.4H659.8M658.8 305.5H659.8M658.8 301.6H659.8M658.8 297.7H659.8M658.8 293.8H659.8M658.8 289.8H659.8M658.8 285.9H659.8M658.8 282.0H659.8M658.8 278.1H659.8M658.8 274.2H659.8M658.8 270.2H659.8M658.8 266.3H659.8M658.8 262.4H659.8M658.8 258.5H659.8M658.8 254.6H659.8M658.8 250.6H659.8M658.8 246.7H659.8M658.8 242.8H659.8M658.8 238.9H659.8M658.8 235.0H659.8M658.8 231.0H659.8M658.8 227.1H659.8M658.8 223.2H659.8M658.8 219.3H659.8M658.8 215.4H659.8M658.8 211.4H659.8M658.8 207.5H659.8M658.8 203.6H659.8M658.8 199.7H659.8M658.8 195.8H659.8M658.8 191.8H659.8M658.8 187.9H659.8M658.8 184.0H659.8M658.8 180.1H659.8M658.8 176.2H659.8M658.8 172.2H659.8M658.8 168.3H659.8M658.8 164.4H659.8M658.8 160.5H659.8M658.8 156.6H659.8M658.8 152.6H659.8M658.8 148.7H659.8M658.8 144.8H659.8M658.8 140.9H659.8M658.8 137.0H659.8M658.8 133.0H659.8M658.8 129.1H659.8M658.8 125.2H659.8M658.8 121.3H659.8M658.8 117.4H659.8M658.8 113.4H659.8M658.8 109.5H659.8M658.8 105.6H659.8M658.8 101.7H659.8M658.8 97.8H659.8M658.8 93.8H659.8M658.8 89.9H659.8M658.8 86.0H659.8M658.8 82.1H659.8M658.8 78.2H659.8M658.8 74.2H659.8M658.8 70.3H659.8M658.8 66.4H659.8M658.8 62.5H659.8M659.5 453.3v2M663.6 453.3v1M667.7 453.3v1M671.8 453.3v1M675.9 453.3v1M680.0 453.3v2M684.1 453.3v1M688.2 453.3v1M692.3 453.3v1M696.4 453.3v1M700.5 453.3v2M704.6 453.3v1M708.7 453.3v1M712.8 453.3v1M716.9 453.3v1M721.0 453.3v2M725.1 453.3v1M729.2 453.3v1M733.3 453.3v1M737.4 453.3v1M741.5 453.3v2M745.6 453.3v1M749.7 453.3v1M753.8 453.3v1M757.9 453.3v1M762.0 453.3v2" stroke="#444" stroke-width="0.500" fill="none"/><rect x="659.8" y="62.2" width="104.20000000000005" height="391.1" fill="none" stroke="#3a3a3a" stroke-width="0.900"/><polyline points="662.6,66.6 663.0,82.0 666.0,88.0 671.0,96.0 680.0,106.0 694.0,116.0 708.0,126.0 712.0,130.0 722.0,138.0 734.0,148.0 742.0,157.0 747.0,168.0 748.4,179.0 747.0,190.0 744.0,200.0 739.0,210.0 732.0,220.0 725.0,229.0 716.7,243.0 702.4,262.4 690.6,282.5 682.8,302.0 677.6,319.0 669.8,349.0 667.5,370.0 665.0,400.0 663.6,439.0 662.4,452.0" fill="none" stroke="#7fa9da" stroke-width="0.800" stroke-linejoin="round"/><text x="656.3" y="440.9" text-anchor="end" style="font-family:'Liberation Sans',sans-serif;font-size:5.9px;fill:#555">0.5</text><text x="656.3" y="421.3" text-anchor="end" style="font-family:'Liberation Sans',sans-serif;font-size:5.9px;fill:#555">1</text><text x="656.3" y="401.7" text-anchor="end" style="font-family:'Liberation Sans',sans-serif;font-size:5.9px;fill:#555">1.5</text><text x="656.3" y="382.1" text-anchor="end" style="font-family:'Liberation Sans',sans-serif;font-size:5.9px;fill:#555">2</text><text x="656.3" y="362.5" text-anchor="end" style="font-family:'Liberation Sans',sans-serif;font-size:5.9px;fill:#555">2.5</text><text x="656.3" y="342.9" text-anchor="end" style="font-family:'Liberation Sans',sans-serif;font-size:5.9px;fill:#555">3</text><text x="656.3" y="323.3" text-anchor="end" style="font-family:'Liberation Sans',sans-serif;font-size:5.9px;fill:#555">3.5</text><text x="656.3" y="303.7" text-anchor="end" style="font-family:'Liberation Sans',sans-serif;font-size:5.9px;fill:#555">4</text><text x="656.3" y="284.1" text-anchor="end" style="font-family:'Liberation Sans',sans-serif;font-size:5.9px;fill:#555">4.5</text><text x="656.3" y="264.5" text-anchor="end" style="font-family:'Liberation Sans',sans-serif;font-size:5.9px;fill:#555">5</text><text x="656.3" y="244.9" text-anchor="end" style="font-family:'Liberation Sans',sans-serif;font-size:5.9px;fill:#555">5.5</text><text x="656.3" y="225.3" text-anchor="end" style="font-family:'Liberation Sans',sans-serif;font-size:5.9px;fill:#555">6</text><text x="656.3" y="205.7" text-anchor="end" style="font-family:'Liberation Sans',sans-serif;font-size:5.9px;fill:#555">6.5</text><text x="656.3" y="186.1" text-anchor="end" style="font-family:'Liberation Sans',sans-serif;font-size:5.9px;fill:#555">7</text><text x="656.3" y="166.5" text-anchor="end" style="font-family:'Liberation Sans',sans-serif;font-size:5.9px;fill:#555">7.5</text><text x="656.3" y="146.9" text-anchor="end" style="font-family:'Liberation Sans',sans-serif;font-size:5.9px;fill:#555">8</text><text x="656.3" y="127.3" text-anchor="end" style="font-family:'Liberation Sans',sans-serif;font-size:5.9px;fill:#555">8.5</text><text x="656.3" y="107.7" text-anchor="end" style="font-family:'Liberation Sans',sans-serif;font-size:5.9px;fill:#555">9</text><text x="656.3" y="88.1" text-anchor="end" style="font-family:'Liberation Sans',sans-serif;font-size:5.9px;fill:#555">9.5</text><text x="656.3" y="68.5" text-anchor="end" style="font-family:'Liberation Sans',sans-serif;font-size:5.9px;fill:#555">10</text><text x="659.5" y="461.6" text-anchor="middle" style="font-family:'Liberation Sans',sans-serif;font-size:5.9px;fill:#555">0</text><text x="680.0" y="461.6" text-anchor="middle" style="font-family:'Liberation Sans',sans-serif;font-size:5.9px;fill:#555">50</text><text x="700.5" y="461.6" text-anchor="middle" style="font-family:'Liberation Sans',sans-serif;font-size:5.9px;fill:#555">100</text><text x="721.0" y="461.6" text-anchor="middle" style="font-family:'Liberation Sans',sans-serif;font-size:5.9px;fill:#555">150</text><text x="741.5" y="461.6" text-anchor="middle" style="font-family:'Liberation Sans',sans-serif;font-size:5.9px;fill:#555">200</text><text x="762.0" y="461.6" text-anchor="middle" style="font-family:'Liberation Sans',sans-serif;font-size:5.9px;fill:#555">250</text><text x="711.5" y="472.79999999999995" text-anchor="middle" style="font-family:'Liberation Sans',sans-serif;font-size:7.200px;font-weight:bold;fill:#222">Intensity</text><text transform="translate(644.8 258) rotate(-90)" text-anchor="middle" style="font-family:'Liberation Sans',sans-serif;font-size:7.600px;font-weight:bold;fill:#222">Z (mm)</text></svg>
<div class="a" style="left:53.6px;top:290.3px;width:237.4px;height:177.7px;background:radial-gradient(circle at 118.9px 88.7px,#ff2400 0.00px,#ff3e00 0.75px,#ff7200 1.50px,#ffc100 2.25px,#d9ff26 3.00px,#68ff97 3.75px,#00f4ff 4.50px,#0087ff 5.25px,#0029ff 6.00px,#0000c9 6.75px,#000093 7.50px,#000062 8.25px,#000052 9.00px,#00006f 9.75px,#000095 10.50px,#0000b5 11.25px,#0000cd 12.00px,#0000fa 12.75px,#0005ff 13.50px,#0006ff 14.25px,#0000fc 15.00px,#0000d2 15.75px,#0000be 16.50px,#0000a4 17.25px,#000085 18.00px,#000063 18.75px,#000042 19.50px,#000037 20.25px,#00004e 21.00px,#00006c 21.75px,#000086 22.50px,#00009b 23.25px,#0000aa 24.00px,#0000b3 24.75px,#0000b6 25.50px,#0000b3 26.25px,#0000aa 27.00px,#00009c 27.75px,#000088 28.50px,#000070 29.25px,#000055 30.00px,#000038 30.75px,#000029 31.50px,#00003c 32.25px,#000056 33.00px,#00006e 33.75px,#000081 34.50px,#000090 35.25px,#000099 36.00px,#00009d 36.75px,#00009b 37.50px,#000095 38.25px,#00008a 39.00px,#00007a 39.75px,#000066 40.50px,#00004e 41.25px,#000034 42.00px,#000020 42.75px,#00002e 43.50px,#000047 44.25px,#00005d 45.00px,#000070 45.75px,#00007e 46.50px,#000087 47.25px,#00008c 48.00px,#00008c 48.75px,#000087 49.50px,#00007e 50.25px,#000071 51.00px,#00005f 51.75px,#00004a 52.50px,#000032 53.25px,#00001b 54.00px,#000023 54.75px,#00003b 55.50px,#000051 56.25px,#000063 57.00px,#000071 57.75px,#00007a 58.50px,#000080 59.25px,#000081 60.00px,#00007d 60.75px,#000076 61.50px,#00006a 62.25px,#00005b 63.00px,#000048 63.75px,#000031 64.50px,#000018 65.25px,#000019 66.00px,#000031 66.75px,#000047 67.50px,#000058 68.25px,#000066 69.00px,#000070 69.75px,#000076 70.50px,#000078 71.25px,#000075 72.00px,#00006f 72.75px,#000065 73.50px,#000057 74.25px,#000046 75.00px,#000031 75.75px,#000018 76.50px,#00000c 77.25px,#000028 78.00px,#00003e 78.75px,#00004f 79.50px,#00005d 80.25px,#000067 81.00px,#00006e 81.75px,#000070 82.50px,#00006f 83.25px,#00006a 84.00px,#000061 84.75px,#000055 85.50px,#000045 86.25px,#000032 87.00px,#000019 87.75px,#000000 88.50px,#00001f 89.25px,#000036 90.00px,#000047 90.75px,#000056 91.50px,#000060 92.25px,#000067 93.00px,#00006a 93.75px,#00006a 94.50px,#000066 95.25px,#00005e 96.00px,#000053 96.75px,#000044 97.50px,#000032 98.25px,#00001b 99.00px,#000000 99.75px,#000015 100.50px,#00002e 101.25px,#000040 102.00px,#00004f 102.75px,#00005a 103.50px,#000061 104.25px,#000065 105.00px,#000065 105.75px,#000062 106.50px,#00005b 107.25px,#000051 108.00px,#000044 108.75px,#000033 109.50px,#00001d 110.25px,#000000 111.00px,#000000 111.75px,#000027 112.50px,#00003a 113.25px,#000048 114.00px,#000054 114.75px,#00005b 115.50px,#000060 116.25px,#000061 117.00px,#00005f 117.75px,#000059 118.50px,#000050 119.25px,#000044 120.00px,#000034 120.75px,#00001f 121.50px,#000000 122.25px,#000000 123.00px,#000020 123.75px,#000034 124.50px,#000043 125.25px,#00004e 126.00px,#000056 126.75px,#00005b 127.50px,#00005d 128.25px,#00005c 129.00px,#000057 129.75px,#00004f 130.50px,#000043 131.25px,#000035 132.00px,#000022 132.75px,#000000 133.50px,#000000 134.25px,#000017 135.00px,#00002e 135.75px,#00003d 136.50px,#000049 137.25px,#000052 138.00px,#000057 138.75px,#00005a 139.50px,#000059 140.25px,#000055 141.00px,#00004d 141.75px,#000043 142.50px,#000036 143.25px,#000024 144.00px,#000000 144.75px,#000000 145.50px,#00000a 146.25px,#000028 147.00px,#000038 147.75px,#000044 148.50px,#00004d 149.25px,#000053 150.00px,#000056 150.75px,#000056 151.50px,#000053 152.25px,#00004c 153.00px,#000043 153.75px,#000036 154.50px,#000026 155.25px,#000000 156.00px,#000000 156.75px,#000000 157.50px,#000021 158.25px,#000031 159.00px,#00003b 159.75px)"></div>
<div class="a" style="left:53.6px;top:290.3px;width:237.4px;height:11px;background:rgba(190,190,190,.62);"></div>
<svg style="left:0;top:0" width="962" height="500" viewBox="0 0 962 500"><path d="M24 379.5H327" stroke="#2424cc" stroke-width="1" opacity=".85"/><path d="M172.5 285.500V472" stroke="#cc2040" stroke-width="1" opacity=".8"/><path d="M172.5 379.0L100 286M172.5 379.0L296 285.500M172.5 379.0L53 472M172.5 379.0L243 472" stroke="#7fb0a8" stroke-width="0.600" opacity=".8"/></svg>
<div class="a" style="left:54.2px;top:285.5px;width:0.6px;height:15.5px;background:#444;"></div>
<div class="t" style="font-size:5.8px;color:#333;left:55.20px;top:293.60px;">0</div>
<div class="a" style="left:81.95px;top:291px;width:0.6px;height:10px;background:#444;"></div>
<div class="t" style="font-size:5.8px;color:#333;left:82.95px;top:293.60px;">0.75</div>
<div class="a" style="left:109.7px;top:291px;width:0.6px;height:10px;background:#444;"></div>
<div class="t" style="font-size:5.8px;color:#333;left:110.70px;top:293.60px;">1.5</div>
<div class="a" style="left:137.45px;top:285.5px;width:0.6px;height:15.5px;background:#444;"></div>
<div class="t" style="font-size:5.8px;color:#333;left:138.45px;top:293.60px;">2.25</div>
<div class="a" style="left:165.2px;top:291px;width:0.6px;height:10px;background:#444;"></div>
<div class="t" style="font-size:5.8px;color:#333;left:166.20px;top:293.60px;">3</div>
<div class="a" style="left:192.95px;top:291px;width:0.6px;height:10px;background:#444;"></div>
<div class="t" style="font-size:5.8px;color:#333;left:193.95px;top:293.60px;">3.75</div>
<div class="a" style="left:220.7px;top:285.5px;width:0.6px;height:15.5px;background:#444;"></div>
<div class="t" style="font-size:5.8px;color:#333;left:221.70px;top:293.60px;">4.5</div>
<div class="a" style="left:248.45px;top:291px;width:0.6px;height:10px;background:#444;"></div>
<div class="t" style="font-size:5.8px;color:#333;left:249.45px;top:293.60px;">5.25</div>
<div class="a" style="left:276.2px;top:291px;width:0.6px;height:10px;background:#444;"></div>
<div class="t" style="font-size:5.8px;color:#333;left:277.20px;top:293.60px;">6</div>
<div class="a" style="left:303.95px;top:285.5px;width:0.6px;height:15.5px;background:#444;"></div>
<div class="t" style="font-size:5.8px;color:#333;left:304.95px;top:293.60px;">6.75</div>
<div class="t" style="font-size:5.8px;color:#333;left:25.00px;top:322.40px;">3.75</div>
<div class="a" style="left:31px;top:328.3px;width:9.5px;height:0.6px;background:#444;"></div>
<div class="a" style="left:25px;top:328.3px;width:12px;height:0.5px;background:#666;"></div>
<div class="t" style="font-size:5.8px;color:#333;left:25.00px;top:350.20px;">3</div>
<div class="a" style="left:28.525796875px;top:356.1px;width:10px;height:0.6px;background:#444;"></div>
<div class="a" style="left:25px;top:356.1px;width:12px;height:0.5px;background:#666;"></div>
<div class="t" style="font-size:5.8px;color:#333;left:25.00px;top:378.00px;">2.25</div>
<div class="a" style="left:31px;top:383.90000000000003px;width:9.5px;height:0.6px;background:#444;"></div>
<div class="a" style="left:25px;top:383.90000000000003px;width:12px;height:0.5px;background:#666;"></div>
<div class="t" style="font-size:5.8px;color:#333;left:25.00px;top:405.80px;">1.5</div>
<div class="a" style="left:31px;top:411.70000000000005px;width:9.5px;height:0.6px;background:#444;"></div>
<div class="a" style="left:25px;top:411.70000000000005px;width:12px;height:0.5px;background:#666;"></div>
<div class="t" style="font-size:5.8px;color:#333;left:25.00px;top:433.60px;">0.75</div>
<div class="a" style="left:31px;top:439.5px;width:9.5px;height:0.6px;background:#444;"></div>
<div class="a" style="left:25px;top:439.5px;width:12px;height:0.5px;background:#666;"></div>
<div class="t" style="font-size:5.8px;color:#333;left:25.00px;top:461.40px;">0</div>
<div class="a" style="left:28.525796875px;top:467.3px;width:10px;height:0.6px;background:#444;"></div>
<div class="a" style="left:25px;top:467.3px;width:12px;height:0.5px;background:#666;"></div>
<div class="a" style="left:319.8px;top:286px;width:7.4px;height:186px;background:linear-gradient(180deg,#800000 0.0%,#9f0000 3.1%,#bf0000 6.2%,#df0000 9.4%,#ff0000 12.5%,#ff2000 15.6%,#ff4000 18.8%,#ff6000 21.9%,#ff8000 25.0%,#ff9f00 28.1%,#ffbf00 31.2%,#ffdf00 34.4%,#ffff00 37.5%,#dfff20 40.6%,#bfff40 43.8%,#9fff60 46.9%,#80ff80 50.0%,#60ff9f 53.1%,#40ffbf 56.2%,#20ffdf 59.4%,#00ffff 62.5%,#00dfff 65.6%,#00bfff 68.8%,#009fff 71.9%,#0080ff 75.0%,#0060ff 78.1%,#0040ff 81.2%,#0020ff 84.4%,#0000ff 87.5%,#0000f1 90.6%,#0000f0 93.8%,#0000c1 96.9%,#000000 100.0%);"></div>
<svg style="left:303.7px;top:344.7px" width="14" height="70" viewBox="-7 -7 14 70" fill="none" stroke="#3a3a3a" stroke-width="0.900"><g transform="translate(0 0.0)"><path d="M-5.500 -5.500h6v6h-6z" stroke-width="0.800"/><circle cx="1.600" cy="1.600" r="2.800" stroke-width="1"/><path d="M3.700 3.700 6 6" stroke-width="1.400"/></g><g transform="translate(0 17.600000000000023)"><circle cx="-0.800" cy="-1" r="3.900" stroke-width="1.200"/><path d="M2.100 1.900 5.600 5.400" stroke-width="1.700"/></g><g transform="translate(0 34.30000000000001)"><path d="M0 -5.800v11.600M-5.800 0h11.600M-1.700 -4 0 -5.800l1.700 1.800M-1.700 4 0 5.800l1.700-1.800M-4 -1.700-5.800 0l1.800 1.700M4 -1.700 5.800 0 4 1.700" stroke-width="0.900"/></g><g transform="translate(0 51.30000000000001)"><path d="M-4.600 -4.600l2.200 2.200M-4.600 -4.600h2.200M-4.600 -4.600v2.200M4.600 -4.600l-2.200 2.200M4.600 -4.600h-2.200M4.600 -4.600v2.200M-4.600 4.600l2.200-2.200M-4.600 4.600h2.200M-4.600 4.600v-2.200M4.600 4.600l-2.200-2.200M4.600 4.600h-2.200M4.600 4.600v-2.200" stroke-width="1"/></g></svg>
<svg width="0" height="0" style="left:0;top:0"><defs><filter id="jet" x="0" y="0" width="1" height="1" color-interpolation-filters="sRGB"><feComponentTransfer><feFuncR type="table" tableValues="0.000 0.000 0.000 0.000 0.000 0.000 0.000 0.000 0.000 0.000 0.000 0.000 0.000 0.000 0.000 0.000 0.000 0.000 0.000 0.000 0.000 0.000 0.000 0.000 0.000 0.000 0.000 0.000 0.000 0.000 0.000 0.000 0.000 0.000 0.000 0.000 0.000 0.000 0.000 0.000 0.000 0.000 0.000 0.000 0.000 0.000 0.000 0.000 0.000 0.000 0.000 0.000 0.000 0.000 0.000 0.000 0.000 0.000 0.000 0.000 0.000 0.000 0.000 0.000 0.000 0.000 0.000 0.000 0.000 0.000 0.000 0.000 0.000 0.000 0.000 0.000 0.000 0.000 0.000 0.000 0.000 0.000 0.000 0.000 0.000 0.000 0.000 0.000 0.000 0.000 0.000 0.000 0.000 0.000 0.000 0.000 0.000 0.000 0.000 0.000 0.000 0.000 0.000 0.000 0.000 0.000 0.000 0.000 0.000 0.000 0.000 0.000 0.000 0.000 0.000 0.000 0.000 0.000 0.000 0.000 0.000 0.000 0.000 0.000 0.000 0.000 0.000 0.000 0.000 0.000 0.000 0.000 0.000 0.000 0.000 0.000 0.000 0.000 0.000 0.000 0.000 0.000 0.000 0.000 0.000 0.000 0.000 0.000 0.000 0.000 0.000 0.000 0.000 0.000 0.000 0.000 0.000 0.019 0.058 0.098 0.138 0.180 0.222 0.265 0.308 0.353 0.398 0.444 0.491 0.539 0.588 0.638 0.688 0.739 0.792 0.845 0.899 0.954 1.000 1.000 1.000 1.000 1.000 1.000 1.000 1.000 1.000 1.000 1.000 1.000 1.000 1.000 1.000 1.000 0.959 0.885 0.811 0.735 0.658 0.579 0.500"/><feFuncG type="table" tableValues="0.000 0.000 0.000 0.000 0.000 0.000 0.000 0.000 0.000 0.000 0.000 0.000 0.000 0.000 0.000 0.000 0.000 0.000 0.000 0.000 0.000 0.000 0.000 0.000 0.000 0.000 0.000 0.000 0.000 0.000 0.000 0.000 0.000 0.000 0.000 0.000 0.000 0.000 0.000 0.000 0.000 0.000 0.000 0.000 0.000 0.000 0.000 0.000 0.000 0.000 0.000 0.000 0.000 0.000 0.000 0.000 0.000 0.000 0.000 0.000 0.000 0.000 0.000 0.000 0.000 0.000 0.000 0.000 0.000 0.000 0.000 0.000 0.000 0.000 0.000 0.000 0.000 0.000 0.000 0.000 0.000 0.000 0.000 0.000 0.000 0.000 0.000 0.000 0.000 0.000 0.000 0.000 0.000 0.000 0.000 0.000 0.000 0.000 0.000 0.000 0.000 0.000 0.000 0.000 0.000 0.000 0.000 0.000 0.000 0.000 0.000 0.000 0.000 0.000 0.000 0.000 0.000 0.000 0.000 0.001 0.018 0.036 0.054 0.072 0.091 0.110 0.130 0.150 0.171 0.192 0.214 0.236 0.259 0.282 0.306 0.330 0.355 0.381 0.407 0.433 0.460 0.488 0.516 0.545 0.575 0.605 0.636 0.667 0.699 0.732 0.766 0.800 0.834 0.870 0.906 0.943 0.981 1.000 1.000 1.000 1.000 1.000 1.000 1.000 1.000 1.000 1.000 1.000 1.000 1.000 1.000 1.000 1.000 1.000 1.000 1.000 1.000 1.000 0.990 0.933 0.876 0.817 0.757 0.696 0.634 0.572 0.508 0.443 0.377 0.310 0.242 0.173 0.103 0.031 0.000 0.000 0.000 0.000 0.000 0.000 0.000"/><feFuncB type="table" tableValues="0.000 0.001 0.003 0.005 0.008 0.012 0.016 0.020 0.025 0.031 0.036 0.042 0.049 0.055 0.062 0.069 0.077 0.085 0.093 0.101 0.110 0.119 0.128 0.137 0.147 0.157 0.167 0.178 0.188 0.199 0.210 0.221 0.233 0.245 0.257 0.269 0.281 0.294 0.307 0.320 0.333 0.346 0.360 0.374 0.388 0.402 0.416 0.431 0.446 0.461 0.476 0.491 0.507 0.522 0.538 0.554 0.571 0.587 0.603 0.620 0.637 0.654 0.671 0.689 0.706 0.724 0.742 0.760 0.778 0.797 0.815 0.834 0.853 0.872 0.891 0.910 0.930 0.940 0.940 0.940 0.940 0.940 0.940 0.940 0.940 0.940 0.940 0.940 0.940 0.940 0.940 0.940 0.940 0.940 0.940 0.940 0.940 0.940 0.940 0.940 0.940 0.940 0.940 0.940 0.940 0.940 0.940 0.940 0.940 0.940 0.943 0.948 0.954 0.960 0.967 0.973 0.980 0.986 0.993 1.000 1.000 1.000 1.000 1.000 1.000 1.000 1.000 1.000 1.000 1.000 1.000 1.000 1.000 1.000 1.000 1.000 1.000 1.000 1.000 1.000 1.000 1.000 1.000 1.000 1.000 1.000 1.000 1.000 1.000 1.000 1.000 1.000 1.000 1.000 1.000 1.000 1.000 0.981 0.942 0.902 0.862 0.820 0.778 0.735 0.692 0.647 0.602 0.556 0.509 0.461 0.412 0.362 0.312 0.261 0.208 0.155 0.101 0.046 0.000 0.000 0.000 0.000 0.000 0.000 0.000 0.000 0.000 0.000 0.000 0.000 0.000 0.000 0.000 0.000 0.000 0.000 0.000 0.000 0.000 0.000 0.000"/></feComponentTransfer></filter></defs></svg>
<div class="t" style="font-size:6.3px;color:#444;left:488.00px;top:51.45px;transform-origin:0 50%;transform:scaleX(0.827);">File</div>
<div class="t" style="font-size:6.3px;color:#444;left:787.40px;top:51.45px;transform-origin:0 50%;transform:scaleX(0.827);">File</div>
<svg style="left:487.2px;top:62.4px;overflow:hidden" width="132.8" height="415.4" viewBox="0 0 132.8 415.4"><defs><linearGradient id="gxh0" x1="0" x2="1" y1="0" y2="0"><stop offset="0.0000" stop-color="#d4d4d4"/><stop offset="0.0075" stop-color="#d6d6d6"/><stop offset="0.0151" stop-color="#d6d6d6"/><stop offset="0.0226" stop-color="#d6d6d6"/><stop offset="0.0301" stop-color="#d6d6d6"/><stop offset="0.0377" stop-color="#d6d6d6"/><stop offset="0.0452" stop-color="#d6d6d6"/><stop offset="0.0527" stop-color="#d6d6d6"/><stop offset="0.0603" stop-color="#d6d6d6"/><stop offset="0.0678" stop-color="#d4d4d4"/><stop offset="0.0753" stop-color="#c8c8c8"/><stop offset="0.0829" stop-color="#b1b1b1"/><stop offset="0.0904" stop-color="#919191"/><stop offset="0.0979" stop-color="#666666"/><stop offset="0.1055" stop-color="#3d3d3d"/><stop offset="0.1130" stop-color="#5c5c5c"/><stop offset="0.1205" stop-color="#898989"/><stop offset="0.1281" stop-color="#acacac"/><stop offset="0.1356" stop-color="#c7c7c7"/><stop offset="0.1431" stop-color="#d9d9d9"/><stop offset="0.1507" stop-color="#e0e0e0"/><stop offset="0.1582" stop-color="#e0e0e0"/><stop offset="0.1657" stop-color="#e0e0e0"/><stop offset="0.1733" stop-color="#e0e0e0"/><stop offset="0.1808" stop-color="#e0e0e0"/><stop offset="0.1883" stop-color="#e0e0e0"/><stop offset="0.1959" stop-color="#e0e0e0"/><stop offset="0.2034" stop-color="#e0e0e0"/><stop offset="0.2109" stop-color="#dedede"/><stop offset="0.2185" stop-color="#d2d2d2"/><stop offset="0.2260" stop-color="#b9b9b9"/><stop offset="0.2335" stop-color="#969696"/><stop offset="0.2411" stop-color="#686868"/><stop offset="0.2486" stop-color="#404040"/><stop offset="0.2561" stop-color="#696969"/><stop offset="0.2637" stop-color="#9b9b9b"/><stop offset="0.2712" stop-color="#c2c2c2"/><stop offset="0.2787" stop-color="#dfdfdf"/><stop offset="0.2863" stop-color="#f4f4f4"/><stop offset="0.2938" stop-color="#fdfdfd"/><stop offset="0.3013" stop-color="#ffffff"/><stop offset="0.3089" stop-color="#ffffff"/><stop offset="0.3164" stop-color="#ffffff"/><stop offset="0.3239" stop-color="#ffffff"/><stop offset="0.3315" stop-color="#ffffff"/><stop offset="0.3390" stop-color="#ffffff"/><stop offset="0.3465" stop-color="#ffffff"/><stop offset="0.3540" stop-color="#fdfdfd"/><stop offset="0.3616" stop-color="#f0f0f0"/><stop offset="0.3691" stop-color="#d4d4d4"/><stop offset="0.3766" stop-color="#aaaaaa"/><stop offset="0.3842" stop-color="#737373"/><stop offset="0.3917" stop-color="#3a3a3a"/><stop offset="0.3992" stop-color="#141414"/><stop offset="0.4068" stop-color="#000000"/><stop offset="0.4143" stop-color="#000000"/><stop offset="0.4218" stop-color="#000000"/><stop offset="0.4294" stop-color="#000000"/><stop offset="0.4369" stop-color="#000000"/><stop offset="0.4444" stop-color="#000000"/><stop offset="0.4520" stop-color="#000000"/><stop offset="0.4595" stop-color="#000000"/><stop offset="0.4670" stop-color="#000000"/><stop offset="0.4746" stop-color="#000000"/><stop offset="0.4821" stop-color="#000000"/><stop offset="0.4896" stop-color="#000000"/><stop offset="0.4972" stop-color="#000000"/><stop offset="0.5047" stop-color="#000000"/><stop offset="0.5122" stop-color="#000000"/><stop offset="0.5198" stop-color="#000000"/><stop offset="0.5273" stop-color="#000000"/><stop offset="0.5348" stop-color="#000000"/><stop offset="0.5424" stop-color="#000000"/><stop offset="0.5499" stop-color="#000000"/><stop offset="0.5574" stop-color="#000000"/><stop offset="0.5650" stop-color="#000000"/><stop offset="0.5725" stop-color="#000000"/><stop offset="0.5800" stop-color="#000000"/><stop offset="0.5876" stop-color="#000000"/><stop offset="0.5951" stop-color="#0b0b0b"/><stop offset="0.6026" stop-color="#272727"/><stop offset="0.6102" stop-color="#5b5b5b"/><stop offset="0.6177" stop-color="#969696"/><stop offset="0.6252" stop-color="#c5c5c5"/><stop offset="0.6328" stop-color="#e6e6e6"/><stop offset="0.6403" stop-color="#f9f9f9"/><stop offset="0.6478" stop-color="#ffffff"/><stop offset="0.6554" stop-color="#ffffff"/><stop offset="0.6629" stop-color="#ffffff"/><stop offset="0.6704" stop-color="#ffffff"/><stop offset="0.6780" stop-color="#ffffff"/><stop offset="0.6855" stop-color="#ffffff"/><stop offset="0.6930" stop-color="#ffffff"/><stop offset="0.7006" stop-color="#ffffff"/><stop offset="0.7081" stop-color="#f9f9f9"/><stop offset="0.7156" stop-color="#e9e9e9"/><stop offset="0.7232" stop-color="#cecece"/><stop offset="0.7307" stop-color="#acacac"/><stop offset="0.7382" stop-color="#7e7e7e"/><stop offset="0.7458" stop-color="#4a4a4a"/><stop offset="0.7533" stop-color="#545454"/><stop offset="0.7608" stop-color="#858585"/><stop offset="0.7684" stop-color="#adadad"/><stop offset="0.7759" stop-color="#c9c9c9"/><stop offset="0.7834" stop-color="#dadada"/><stop offset="0.7910" stop-color="#e0e0e0"/><stop offset="0.7985" stop-color="#e0e0e0"/><stop offset="0.8060" stop-color="#e0e0e0"/><stop offset="0.8136" stop-color="#e0e0e0"/><stop offset="0.8211" stop-color="#e0e0e0"/><stop offset="0.8286" stop-color="#e0e0e0"/><stop offset="0.8362" stop-color="#e0e0e0"/><stop offset="0.8437" stop-color="#e0e0e0"/><stop offset="0.8512" stop-color="#dddddd"/><stop offset="0.8588" stop-color="#cfcfcf"/><stop offset="0.8663" stop-color="#b8b8b8"/><stop offset="0.8738" stop-color="#989898"/><stop offset="0.8814" stop-color="#6f6f6f"/><stop offset="0.8889" stop-color="#414141"/><stop offset="0.8964" stop-color="#535353"/><stop offset="0.9040" stop-color="#818181"/><stop offset="0.9115" stop-color="#a6a6a6"/><stop offset="0.9190" stop-color="#c0c0c0"/><stop offset="0.9266" stop-color="#d1d1d1"/><stop offset="0.9341" stop-color="#d6d6d6"/><stop offset="0.9416" stop-color="#d6d6d6"/><stop offset="0.9492" stop-color="#d6d6d6"/><stop offset="0.9567" stop-color="#d6d6d6"/><stop offset="0.9642" stop-color="#d6d6d6"/><stop offset="0.9718" stop-color="#d6d6d6"/><stop offset="0.9793" stop-color="#d6d6d6"/><stop offset="0.9868" stop-color="#d6d6d6"/><stop offset="0.9944" stop-color="#d4d4d4"/></linearGradient><linearGradient id="gzh0" x1="0" x2="0" y1="0" y2="1"><stop offset="0.0000" stop-color="#252525"/><stop offset="0.0065" stop-color="#2b2b2b"/><stop offset="0.0131" stop-color="#303030"/><stop offset="0.0196" stop-color="#353535"/><stop offset="0.0261" stop-color="#3a3a3a"/><stop offset="0.0327" stop-color="#3f3f3f"/><stop offset="0.0392" stop-color="#444444"/><stop offset="0.0458" stop-color="#484848"/><stop offset="0.0523" stop-color="#4c4c4c"/><stop offset="0.0588" stop-color="#4f4f4f"/><stop offset="0.0654" stop-color="#525252"/><stop offset="0.0719" stop-color="#555555"/><stop offset="0.0784" stop-color="#585858"/><stop offset="0.0850" stop-color="#5a5a5a"/><stop offset="0.0915" stop-color="#5b5b5b"/><stop offset="0.0980" stop-color="#5d5d5d"/><stop offset="0.1046" stop-color="#5e5e5e"/><stop offset="0.1111" stop-color="#5f5f5f"/><stop offset="0.1176" stop-color="#606060"/><stop offset="0.1242" stop-color="#616161"/><stop offset="0.1307" stop-color="#626262"/><stop offset="0.1373" stop-color="#636363"/><stop offset="0.1438" stop-color="#646464"/><stop offset="0.1503" stop-color="#656565"/><stop offset="0.1569" stop-color="#666666"/><stop offset="0.1634" stop-color="#666666"/><stop offset="0.1699" stop-color="#666666"/><stop offset="0.1765" stop-color="#666666"/><stop offset="0.1830" stop-color="#666666"/><stop offset="0.1895" stop-color="#666666"/><stop offset="0.1961" stop-color="#666666"/><stop offset="0.2026" stop-color="#676767"/><stop offset="0.2092" stop-color="#676767"/><stop offset="0.2157" stop-color="#676767"/><stop offset="0.2222" stop-color="#676767"/><stop offset="0.2288" stop-color="#676767"/><stop offset="0.2353" stop-color="#676767"/><stop offset="0.2418" stop-color="#676767"/><stop offset="0.2484" stop-color="#676767"/><stop offset="0.2549" stop-color="#686868"/><stop offset="0.2614" stop-color="#686868"/><stop offset="0.2680" stop-color="#686868"/><stop offset="0.2745" stop-color="#686868"/><stop offset="0.2810" stop-color="#686868"/><stop offset="0.2876" stop-color="#686868"/><stop offset="0.2941" stop-color="#686868"/><stop offset="0.3007" stop-color="#696969"/><stop offset="0.3072" stop-color="#686868"/><stop offset="0.3137" stop-color="#686868"/><stop offset="0.3203" stop-color="#686868"/><stop offset="0.3268" stop-color="#686868"/><stop offset="0.3333" stop-color="#676767"/><stop offset="0.3399" stop-color="#676767"/><stop offset="0.3464" stop-color="#676767"/><stop offset="0.3529" stop-color="#676767"/><stop offset="0.3595" stop-color="#676767"/><stop offset="0.3660" stop-color="#666666"/><stop offset="0.3725" stop-color="#666666"/><stop offset="0.3791" stop-color="#666666"/><stop offset="0.3856" stop-color="#666666"/><stop offset="0.3922" stop-color="#666666"/><stop offset="0.3987" stop-color="#656565"/><stop offset="0.4052" stop-color="#656565"/><stop offset="0.4118" stop-color="#656565"/><stop offset="0.4183" stop-color="#646464"/><stop offset="0.4248" stop-color="#646464"/><stop offset="0.4314" stop-color="#646464"/><stop offset="0.4379" stop-color="#636363"/><stop offset="0.4444" stop-color="#636363"/><stop offset="0.4510" stop-color="#636363"/><stop offset="0.4575" stop-color="#626262"/><stop offset="0.4641" stop-color="#626262"/><stop offset="0.4706" stop-color="#626262"/><stop offset="0.4771" stop-color="#616161"/><stop offset="0.4837" stop-color="#616161"/><stop offset="0.4902" stop-color="#616161"/><stop offset="0.4967" stop-color="#606060"/><stop offset="0.5033" stop-color="#606060"/><stop offset="0.5098" stop-color="#5f5f5f"/><stop offset="0.5163" stop-color="#5e5e5e"/><stop offset="0.5229" stop-color="#5d5d5d"/><stop offset="0.5294" stop-color="#5c5c5c"/><stop offset="0.5359" stop-color="#5c5c5c"/><stop offset="0.5425" stop-color="#5c5c5c"/><stop offset="0.5490" stop-color="#5b5b5b"/><stop offset="0.5556" stop-color="#5b5b5b"/><stop offset="0.5621" stop-color="#5a5a5a"/><stop offset="0.5686" stop-color="#5a5a5a"/><stop offset="0.5752" stop-color="#5a5a5a"/><stop offset="0.5817" stop-color="#595959"/><stop offset="0.5882" stop-color="#595959"/><stop offset="0.5948" stop-color="#595959"/><stop offset="0.6013" stop-color="#585858"/><stop offset="0.6078" stop-color="#585858"/><stop offset="0.6144" stop-color="#575757"/><stop offset="0.6209" stop-color="#575757"/><stop offset="0.6275" stop-color="#575757"/><stop offset="0.6340" stop-color="#565656"/><stop offset="0.6405" stop-color="#555555"/><stop offset="0.6471" stop-color="#555555"/><stop offset="0.6536" stop-color="#545454"/><stop offset="0.6601" stop-color="#535353"/><stop offset="0.6667" stop-color="#525252"/><stop offset="0.6732" stop-color="#525252"/><stop offset="0.6797" stop-color="#515151"/><stop offset="0.6863" stop-color="#505050"/><stop offset="0.6928" stop-color="#505050"/><stop offset="0.6993" stop-color="#4f4f4f"/><stop offset="0.7059" stop-color="#4e4e4e"/><stop offset="0.7124" stop-color="#4d4d4d"/><stop offset="0.7190" stop-color="#4c4c4c"/><stop offset="0.7255" stop-color="#4b4b4b"/><stop offset="0.7320" stop-color="#4a4a4a"/><stop offset="0.7386" stop-color="#494949"/><stop offset="0.7451" stop-color="#484848"/><stop offset="0.7516" stop-color="#474747"/><stop offset="0.7582" stop-color="#454545"/><stop offset="0.7647" stop-color="#444444"/><stop offset="0.7712" stop-color="#434343"/><stop offset="0.7778" stop-color="#424242"/><stop offset="0.7843" stop-color="#424242"/><stop offset="0.7908" stop-color="#414141"/><stop offset="0.7974" stop-color="#414141"/><stop offset="0.8039" stop-color="#404040"/><stop offset="0.8105" stop-color="#3f3f3f"/><stop offset="0.8170" stop-color="#3f3f3f"/><stop offset="0.8235" stop-color="#3e3e3e"/><stop offset="0.8301" stop-color="#3e3e3e"/><stop offset="0.8366" stop-color="#3d3d3d"/><stop offset="0.8431" stop-color="#3c3c3c"/><stop offset="0.8497" stop-color="#3c3c3c"/><stop offset="0.8562" stop-color="#3b3b3b"/><stop offset="0.8627" stop-color="#3b3b3b"/><stop offset="0.8693" stop-color="#3a3a3a"/><stop offset="0.8758" stop-color="#393939"/><stop offset="0.8824" stop-color="#393939"/><stop offset="0.8889" stop-color="#383838"/><stop offset="0.8954" stop-color="#383838"/><stop offset="0.9020" stop-color="#373737"/><stop offset="0.9085" stop-color="#363636"/><stop offset="0.9150" stop-color="#363636"/><stop offset="0.9216" stop-color="#353535"/><stop offset="0.9281" stop-color="#343434"/><stop offset="0.9346" stop-color="#343434"/><stop offset="0.9412" stop-color="#333333"/><stop offset="0.9477" stop-color="#333333"/><stop offset="0.9542" stop-color="#323232"/><stop offset="0.9608" stop-color="#323232"/><stop offset="0.9673" stop-color="#313131"/><stop offset="0.9739" stop-color="#313131"/><stop offset="0.9804" stop-color="#303030"/><stop offset="0.9869" stop-color="#303030"/><stop offset="0.9935" stop-color="#2f2f2f"/><stop offset="1.0000" stop-color="#2f2f2f"/></linearGradient><linearGradient id="gxh1" x1="0" x2="1" y1="0" y2="0"><stop offset="0.0000" stop-color="#040404"/><stop offset="0.0312" stop-color="#141414"/><stop offset="0.0625" stop-color="#353535"/><stop offset="0.0938" stop-color="#5b5b5b"/><stop offset="0.1250" stop-color="#7c7c7c"/><stop offset="0.1562" stop-color="#979797"/><stop offset="0.1875" stop-color="#adadad"/><stop offset="0.2188" stop-color="#bfbfbf"/><stop offset="0.2500" stop-color="#cecece"/><stop offset="0.2812" stop-color="#dadada"/><stop offset="0.3125" stop-color="#e4e4e4"/><stop offset="0.3438" stop-color="#ececec"/><stop offset="0.3750" stop-color="#f3f3f3"/><stop offset="0.4062" stop-color="#f8f8f8"/><stop offset="0.4375" stop-color="#fbfbfb"/><stop offset="0.4688" stop-color="#fefefe"/><stop offset="0.5000" stop-color="#fefefe"/><stop offset="0.5312" stop-color="#fefefe"/><stop offset="0.5625" stop-color="#fcfcfc"/><stop offset="0.5938" stop-color="#f9f9f9"/><stop offset="0.6250" stop-color="#f5f5f5"/><stop offset="0.6562" stop-color="#efefef"/><stop offset="0.6875" stop-color="#e8e8e8"/><stop offset="0.7188" stop-color="#dfdfdf"/><stop offset="0.7500" stop-color="#d3d3d3"/><stop offset="0.7812" stop-color="#c5c5c5"/><stop offset="0.8125" stop-color="#b4b4b4"/><stop offset="0.8438" stop-color="#a0a0a0"/><stop offset="0.8750" stop-color="#878787"/><stop offset="0.9062" stop-color="#696969"/><stop offset="0.9375" stop-color="#444444"/><stop offset="0.9688" stop-color="#1f1f1f"/><stop offset="1.0000" stop-color="#080808"/></linearGradient><linearGradient id="gzh1" x1="0" x2="0" y1="0" y2="1"><stop offset="0.0000" stop-color="#424242"/><stop offset="0.0065" stop-color="#414141"/><stop offset="0.0131" stop-color="#414141"/><stop offset="0.0196" stop-color="#414141"/><stop offset="0.0261" stop-color="#414141"/><stop offset="0.0327" stop-color="#414141"/><stop offset="0.0392" stop-color="#454545"/><stop offset="0.0458" stop-color="#494949"/><stop offset="0.0523" stop-color="#4c4c4c"/><stop offset="0.0588" stop-color="#505050"/><stop offset="0.0654" stop-color="#545454"/><stop offset="0.0719" stop-color="#5a5a5a"/><stop offset="0.0784" stop-color="#5f5f5f"/><stop offset="0.0850" stop-color="#646464"/><stop offset="0.0915" stop-color="#696969"/><stop offset="0.0980" stop-color="#707070"/><stop offset="0.1046" stop-color="#757575"/><stop offset="0.1111" stop-color="#7a7a7a"/><stop offset="0.1176" stop-color="#828282"/><stop offset="0.1242" stop-color="#898989"/><stop offset="0.1307" stop-color="#909090"/><stop offset="0.1373" stop-color="#979797"/><stop offset="0.1438" stop-color="#9e9e9e"/><stop offset="0.1503" stop-color="#a3a3a3"/><stop offset="0.1569" stop-color="#a9a9a9"/><stop offset="0.1634" stop-color="#afafaf"/><stop offset="0.1699" stop-color="#b5b5b5"/><stop offset="0.1765" stop-color="#bababa"/><stop offset="0.1830" stop-color="#bfbfbf"/><stop offset="0.1895" stop-color="#c5c5c5"/><stop offset="0.1961" stop-color="#c9c9c9"/><stop offset="0.2026" stop-color="#cdcdcd"/><stop offset="0.2092" stop-color="#d1d1d1"/><stop offset="0.2157" stop-color="#d5d5d5"/><stop offset="0.2222" stop-color="#dadada"/><stop offset="0.2288" stop-color="#dedede"/><stop offset="0.2353" stop-color="#e1e1e1"/><stop offset="0.2418" stop-color="#e4e4e4"/><stop offset="0.2484" stop-color="#e7e7e7"/><stop offset="0.2549" stop-color="#eaeaea"/><stop offset="0.2614" stop-color="#ececec"/><stop offset="0.2680" stop-color="#eeeeee"/><stop offset="0.2745" stop-color="#f1f1f1"/><stop offset="0.2810" stop-color="#f2f2f2"/><stop offset="0.2876" stop-color="#f3f3f3"/><stop offset="0.2941" stop-color="#f3f3f3"/><stop offset="0.3007" stop-color="#f3f3f3"/><stop offset="0.3072" stop-color="#f2f2f2"/><stop offset="0.3137" stop-color="#f2f2f2"/><stop offset="0.3203" stop-color="#f1f1f1"/><stop offset="0.3268" stop-color="#f1f1f1"/><stop offset="0.3333" stop-color="#f0f0f0"/><stop offset="0.3399" stop-color="#efefef"/><stop offset="0.3464" stop-color="#eeeeee"/><stop offset="0.3529" stop-color="#ededed"/><stop offset="0.3595" stop-color="#ececec"/><stop offset="0.3660" stop-color="#ebebeb"/><stop offset="0.3725" stop-color="#eaeaea"/><stop offset="0.3791" stop-color="#e8e8e8"/><stop offset="0.3856" stop-color="#e7e7e7"/><stop offset="0.3922" stop-color="#e5e5e5"/><stop offset="0.3987" stop-color="#e4e4e4"/><stop offset="0.4052" stop-color="#e2e2e2"/><stop offset="0.4118" stop-color="#e0e0e0"/><stop offset="0.4183" stop-color="#dfdfdf"/><stop offset="0.4248" stop-color="#dddddd"/><stop offset="0.4314" stop-color="#dcdcdc"/><stop offset="0.4379" stop-color="#dbdbdb"/><stop offset="0.4444" stop-color="#d9d9d9"/><stop offset="0.4510" stop-color="#d8d8d8"/><stop offset="0.4575" stop-color="#d6d6d6"/><stop offset="0.4641" stop-color="#d4d4d4"/><stop offset="0.4706" stop-color="#d2d2d2"/><stop offset="0.4771" stop-color="#cfcfcf"/><stop offset="0.4837" stop-color="#cecece"/><stop offset="0.4902" stop-color="#cccccc"/><stop offset="0.4967" stop-color="#cacaca"/><stop offset="0.5033" stop-color="#c9c9c9"/><stop offset="0.5098" stop-color="#c7c7c7"/><stop offset="0.5163" stop-color="#c5c5c5"/><stop offset="0.5229" stop-color="#c3c3c3"/><stop offset="0.5294" stop-color="#c1c1c1"/><stop offset="0.5359" stop-color="#c0c0c0"/><stop offset="0.5425" stop-color="#bebebe"/><stop offset="0.5490" stop-color="#bbbbbb"/><stop offset="0.5556" stop-color="#b9b9b9"/><stop offset="0.5621" stop-color="#b7b7b7"/><stop offset="0.5686" stop-color="#b5b5b5"/><stop offset="0.5752" stop-color="#b3b3b3"/><stop offset="0.5817" stop-color="#b2b2b2"/><stop offset="0.5882" stop-color="#b0b0b0"/><stop offset="0.5948" stop-color="#aeaeae"/><stop offset="0.6013" stop-color="#acacac"/><stop offset="0.6078" stop-color="#aaaaaa"/><stop offset="0.6144" stop-color="#a8a8a8"/><stop offset="0.6209" stop-color="#a7a7a7"/><stop offset="0.6275" stop-color="#a5a5a5"/><stop offset="0.6340" stop-color="#a3a3a3"/><stop offset="0.6405" stop-color="#a1a1a1"/><stop offset="0.6471" stop-color="#9f9f9f"/><stop offset="0.6536" stop-color="#9e9e9e"/><stop offset="0.6601" stop-color="#9c9c9c"/><stop offset="0.6667" stop-color="#9b9b9b"/><stop offset="0.6732" stop-color="#999999"/><stop offset="0.6797" stop-color="#979797"/><stop offset="0.6863" stop-color="#969696"/><stop offset="0.6928" stop-color="#949494"/><stop offset="0.6993" stop-color="#939393"/><stop offset="0.7059" stop-color="#919191"/><stop offset="0.7124" stop-color="#8f8f8f"/><stop offset="0.7190" stop-color="#8d8d8d"/><stop offset="0.7255" stop-color="#8b8b8b"/><stop offset="0.7320" stop-color="#898989"/><stop offset="0.7386" stop-color="#878787"/><stop offset="0.7451" stop-color="#868686"/><stop offset="0.7516" stop-color="#848484"/><stop offset="0.7582" stop-color="#838383"/><stop offset="0.7647" stop-color="#828282"/><stop offset="0.7712" stop-color="#818181"/><stop offset="0.7778" stop-color="#808080"/><stop offset="0.7843" stop-color="#7e7e7e"/><stop offset="0.7908" stop-color="#7d7d7d"/><stop offset="0.7974" stop-color="#7c7c7c"/><stop offset="0.8039" stop-color="#7a7a7a"/><stop offset="0.8105" stop-color="#787878"/><stop offset="0.8170" stop-color="#777777"/><stop offset="0.8235" stop-color="#757575"/><stop offset="0.8301" stop-color="#737373"/><stop offset="0.8366" stop-color="#717171"/><stop offset="0.8431" stop-color="#707070"/><stop offset="0.8497" stop-color="#6e6e6e"/><stop offset="0.8562" stop-color="#6c6c6c"/><stop offset="0.8627" stop-color="#6a6a6a"/><stop offset="0.8693" stop-color="#686868"/><stop offset="0.8758" stop-color="#666666"/><stop offset="0.8824" stop-color="#656565"/><stop offset="0.8889" stop-color="#646464"/><stop offset="0.8954" stop-color="#636363"/><stop offset="0.9020" stop-color="#626262"/><stop offset="0.9085" stop-color="#606060"/><stop offset="0.9150" stop-color="#5f5f5f"/><stop offset="0.9216" stop-color="#5e5e5e"/><stop offset="0.9281" stop-color="#5c5c5c"/><stop offset="0.9346" stop-color="#5b5b5b"/><stop offset="0.9412" stop-color="#5a5a5a"/><stop offset="0.9477" stop-color="#585858"/><stop offset="0.9542" stop-color="#575757"/><stop offset="0.9608" stop-color="#565656"/><stop offset="0.9673" stop-color="#555555"/><stop offset="0.9739" stop-color="#545454"/><stop offset="0.9804" stop-color="#535353"/><stop offset="0.9869" stop-color="#515151"/><stop offset="0.9935" stop-color="#505050"/><stop offset="1.0000" stop-color="#4f4f4f"/></linearGradient><linearGradient id="gxh2" x1="0" x2="1" y1="0" y2="0"><stop offset="0.0000" stop-color="#030303"/><stop offset="0.0312" stop-color="#121212"/><stop offset="0.0625" stop-color="#323232"/><stop offset="0.0938" stop-color="#565656"/><stop offset="0.1250" stop-color="#747474"/><stop offset="0.1562" stop-color="#8c8c8c"/><stop offset="0.1875" stop-color="#9f9f9f"/><stop offset="0.2188" stop-color="#afafaf"/><stop offset="0.2500" stop-color="#bdbdbd"/><stop offset="0.2812" stop-color="#cacaca"/><stop offset="0.3125" stop-color="#d6d6d6"/><stop offset="0.3438" stop-color="#e1e1e1"/><stop offset="0.3750" stop-color="#ebebeb"/><stop offset="0.4062" stop-color="#f3f3f3"/><stop offset="0.4375" stop-color="#f9f9f9"/><stop offset="0.4688" stop-color="#fdfdfd"/><stop offset="0.5000" stop-color="#fefefe"/><stop offset="0.5312" stop-color="#fefefe"/><stop offset="0.5625" stop-color="#fbfbfb"/><stop offset="0.5938" stop-color="#f6f6f6"/><stop offset="0.6250" stop-color="#eeeeee"/><stop offset="0.6562" stop-color="#e5e5e5"/><stop offset="0.6875" stop-color="#dbdbdb"/><stop offset="0.7188" stop-color="#cfcfcf"/><stop offset="0.7500" stop-color="#c3c3c3"/><stop offset="0.7812" stop-color="#b5b5b5"/><stop offset="0.8125" stop-color="#a6a6a6"/><stop offset="0.8438" stop-color="#949494"/><stop offset="0.8750" stop-color="#7e7e7e"/><stop offset="0.9062" stop-color="#636363"/><stop offset="0.9375" stop-color="#414141"/><stop offset="0.9688" stop-color="#1d1d1d"/><stop offset="1.0000" stop-color="#070707"/></linearGradient><linearGradient id="gzh2" x1="0" x2="0" y1="0" y2="1"><stop offset="0.0000" stop-color="#606060"/><stop offset="0.0065" stop-color="#5f5f5f"/><stop offset="0.0131" stop-color="#5e5e5e"/><stop offset="0.0196" stop-color="#5f5f5f"/><stop offset="0.0261" stop-color="#5f5f5f"/><stop offset="0.0327" stop-color="#5f5f5f"/><stop offset="0.0392" stop-color="#656565"/><stop offset="0.0458" stop-color="#6a6a6a"/><stop offset="0.0523" stop-color="#707070"/><stop offset="0.0588" stop-color="#757575"/><stop offset="0.0654" stop-color="#7b7b7b"/><stop offset="0.0719" stop-color="#848484"/><stop offset="0.0784" stop-color="#8b8b8b"/><stop offset="0.0850" stop-color="#929292"/><stop offset="0.0915" stop-color="#999999"/><stop offset="0.0980" stop-color="#a3a3a3"/><stop offset="0.1046" stop-color="#ababab"/><stop offset="0.1111" stop-color="#b1b1b1"/><stop offset="0.1176" stop-color="#b7b7b7"/><stop offset="0.1242" stop-color="#bcbcbc"/><stop offset="0.1307" stop-color="#c1c1c1"/><stop offset="0.1373" stop-color="#c5c5c5"/><stop offset="0.1438" stop-color="#c9c9c9"/><stop offset="0.1503" stop-color="#cdcdcd"/><stop offset="0.1569" stop-color="#d0d0d0"/><stop offset="0.1634" stop-color="#d4d4d4"/><stop offset="0.1699" stop-color="#d7d7d7"/><stop offset="0.1765" stop-color="#dbdbdb"/><stop offset="0.1830" stop-color="#dedede"/><stop offset="0.1895" stop-color="#e1e1e1"/><stop offset="0.1961" stop-color="#e3e3e3"/><stop offset="0.2026" stop-color="#e5e5e5"/><stop offset="0.2092" stop-color="#e7e7e7"/><stop offset="0.2157" stop-color="#e9e9e9"/><stop offset="0.2222" stop-color="#ebebeb"/><stop offset="0.2288" stop-color="#ededed"/><stop offset="0.2353" stop-color="#eeeeee"/><stop offset="0.2418" stop-color="#efefef"/><stop offset="0.2484" stop-color="#f0f0f0"/><stop offset="0.2549" stop-color="#f1f1f1"/><stop offset="0.2614" stop-color="#f2f2f2"/><stop offset="0.2680" stop-color="#f2f2f2"/><stop offset="0.2745" stop-color="#f2f2f2"/><stop offset="0.2810" stop-color="#f2f2f2"/><stop offset="0.2876" stop-color="#f3f3f3"/><stop offset="0.2941" stop-color="#f3f3f3"/><stop offset="0.3007" stop-color="#f3f3f3"/><stop offset="0.3072" stop-color="#f2f2f2"/><stop offset="0.3137" stop-color="#f2f2f2"/><stop offset="0.3203" stop-color="#f1f1f1"/><stop offset="0.3268" stop-color="#f1f1f1"/><stop offset="0.3333" stop-color="#f0f0f0"/><stop offset="0.3399" stop-color="#efefef"/><stop offset="0.3464" stop-color="#eeeeee"/><stop offset="0.3529" stop-color="#ededed"/><stop offset="0.3595" stop-color="#ececec"/><stop offset="0.3660" stop-color="#ebebeb"/><stop offset="0.3725" stop-color="#eaeaea"/><stop offset="0.3791" stop-color="#e8e8e8"/><stop offset="0.3856" stop-color="#e7e7e7"/><stop offset="0.3922" stop-color="#e5e5e5"/><stop offset="0.3987" stop-color="#e4e4e4"/><stop offset="0.4052" stop-color="#e2e2e2"/><stop offset="0.4118" stop-color="#e0e0e0"/><stop offset="0.4183" stop-color="#dfdfdf"/><stop offset="0.4248" stop-color="#dddddd"/><stop offset="0.4314" stop-color="#dcdcdc"/><stop offset="0.4379" stop-color="#dbdbdb"/><stop offset="0.4444" stop-color="#d9d9d9"/><stop offset="0.4510" stop-color="#d8d8d8"/><stop offset="0.4575" stop-color="#d6d6d6"/><stop offset="0.4641" stop-color="#d4d4d4"/><stop offset="0.4706" stop-color="#d2d2d2"/><stop offset="0.4771" stop-color="#cfcfcf"/><stop offset="0.4837" stop-color="#cecece"/><stop offset="0.4902" stop-color="#cccccc"/><stop offset="0.4967" stop-color="#cacaca"/><stop offset="0.5033" stop-color="#c9c9c9"/><stop offset="0.5098" stop-color="#c7c7c7"/><stop offset="0.5163" stop-color="#c5c5c5"/><stop offset="0.5229" stop-color="#c3c3c3"/><stop offset="0.5294" stop-color="#c1c1c1"/><stop offset="0.5359" stop-color="#c0c0c0"/><stop offset="0.5425" stop-color="#bebebe"/><stop offset="0.5490" stop-color="#bbbbbb"/><stop offset="0.5556" stop-color="#b9b9b9"/><stop offset="0.5621" stop-color="#b7b7b7"/><stop offset="0.5686" stop-color="#b5b5b5"/><stop offset="0.5752" stop-color="#b3b3b3"/><stop offset="0.5817" stop-color="#b2b2b2"/><stop offset="0.5882" stop-color="#b0b0b0"/><stop offset="0.5948" stop-color="#aeaeae"/><stop offset="0.6013" stop-color="#acacac"/><stop offset="0.6078" stop-color="#aaaaaa"/><stop offset="0.6144" stop-color="#a8a8a8"/><stop offset="0.6209" stop-color="#a7a7a7"/><stop offset="0.6275" stop-color="#a5a5a5"/><stop offset="0.6340" stop-color="#a3a3a3"/><stop offset="0.6405" stop-color="#a1a1a1"/><stop offset="0.6471" stop-color="#9f9f9f"/><stop offset="0.6536" stop-color="#9e9e9e"/><stop offset="0.6601" stop-color="#9c9c9c"/><stop offset="0.6667" stop-color="#9b9b9b"/><stop offset="0.6732" stop-color="#999999"/><stop offset="0.6797" stop-color="#979797"/><stop offset="0.6863" stop-color="#969696"/><stop offset="0.6928" stop-color="#949494"/><stop offset="0.6993" stop-color="#939393"/><stop offset="0.7059" stop-color="#919191"/><stop offset="0.7124" stop-color="#8f8f8f"/><stop offset="0.7190" stop-color="#8d8d8d"/><stop offset="0.7255" stop-color="#8b8b8b"/><stop offset="0.7320" stop-color="#898989"/><stop offset="0.7386" stop-color="#878787"/><stop offset="0.7451" stop-color="#868686"/><stop offset="0.7516" stop-color="#848484"/><stop offset="0.7582" stop-color="#838383"/><stop offset="0.7647" stop-color="#828282"/><stop offset="0.7712" stop-color="#818181"/><stop offset="0.7778" stop-color="#808080"/><stop offset="0.7843" stop-color="#7e7e7e"/><stop offset="0.7908" stop-color="#7d7d7d"/><stop offset="0.7974" stop-color="#7c7c7c"/><stop offset="0.8039" stop-color="#7a7a7a"/><stop offset="0.8105" stop-color="#787878"/><stop offset="0.8170" stop-color="#777777"/><stop offset="0.8235" stop-color="#757575"/><stop offset="0.8301" stop-color="#737373"/><stop offset="0.8366" stop-color="#717171"/><stop offset="0.8431" stop-color="#707070"/><stop offset="0.8497" stop-color="#6e6e6e"/><stop offset="0.8562" stop-color="#6c6c6c"/><stop offset="0.8627" stop-color="#6a6a6a"/><stop offset="0.8693" stop-color="#686868"/><stop offset="0.8758" stop-color="#666666"/><stop offset="0.8824" stop-color="#656565"/><stop offset="0.8889" stop-color="#646464"/><stop offset="0.8954" stop-color="#636363"/><stop offset="0.9020" stop-color="#626262"/><stop offset="0.9085" stop-color="#606060"/><stop offset="0.9150" stop-color="#5f5f5f"/><stop offset="0.9216" stop-color="#5e5e5e"/><stop offset="0.9281" stop-color="#5c5c5c"/><stop offset="0.9346" stop-color="#5b5b5b"/><stop offset="0.9412" stop-color="#5a5a5a"/><stop offset="0.9477" stop-color="#585858"/><stop offset="0.9542" stop-color="#575757"/><stop offset="0.9608" stop-color="#565656"/><stop offset="0.9673" stop-color="#555555"/><stop offset="0.9739" stop-color="#545454"/><stop offset="0.9804" stop-color="#535353"/><stop offset="0.9869" stop-color="#515151"/><stop offset="0.9935" stop-color="#505050"/><stop offset="1.0000" stop-color="#4f4f4f"/></linearGradient></defs><rect width="132.8" height="415.4" fill="#00004c"/><g filter="url(#jet)" style="isolation:isolate"><rect x="0" y="60.1" width="132.8" height="307.7" fill="#000"/><g style="isolation:isolate"><rect x="0.00" y="60.1" width="132.75" height="307.7" fill="url(#gxh0)"/><rect x="0.00" y="60.1" width="132.75" height="307.7" fill="url(#gzh0)" style="mix-blend-mode:multiply"/></g><g style="isolation:isolate;mix-blend-mode:lighten"><rect x="50.00" y="60.1" width="32.00" height="307.7" fill="url(#gxh1)"/><rect x="50.00" y="60.1" width="32.00" height="307.7" fill="url(#gzh1)" style="mix-blend-mode:multiply"/></g><g style="isolation:isolate;mix-blend-mode:lighten"><rect x="50.00" y="60.1" width="32.00" height="307.7" fill="url(#gxh2)"/><rect x="50.00" y="60.1" width="32.00" height="307.7" fill="url(#gzh2)" style="mix-blend-mode:multiply"/></g></g><path d="M66.2 15.800V60.1M66.2 367.8V415.4" stroke="#167e6c" stroke-width="1"/><path d="M66.2 60.1V367.8" stroke="#7fb0f0" stroke-width="0.700" opacity=".4"/><rect x="15.5" y="0" width="117.3" height="15.800" fill="#fff" fill-opacity=".43"/><rect x="0" y="15.800" width="15.5" height="399.6" fill="#fff" fill-opacity=".43"/><defs><linearGradient id="glh" x1="0" x2="0" y1="0" y2="1"><stop offset="0" stop-color="#8a8ac8"/><stop offset=".35" stop-color="#8080b4"/><stop offset=".6" stop-color="#808094"/><stop offset="1" stop-color="#80808c"/></linearGradient></defs><path d="M66.2 0V15.800" stroke="#9a9aa8" stroke-width="0.800" opacity=".6"/><path d="M30.0 8.5V15.800" stroke="#223" stroke-width="0.600"/><text x="30.8" y="13.300" style="font-family:'Liberation Sans',sans-serif;font-size:5.800px;fill:#222">2.625</text><path d="M54.0 0V15.800" stroke="#223" stroke-width="0.600"/><text x="54.8" y="13.300" style="font-family:'Liberation Sans',sans-serif;font-size:5.800px;fill:#222">3</text><path d="M76.0 8.5V15.800" stroke="#223" stroke-width="0.600"/><text x="76.8" y="13.300" style="font-family:'Liberation Sans',sans-serif;font-size:5.800px;fill:#222">3.375</text><path d="M98.0 8.5V15.800" stroke="#223" stroke-width="0.600"/><text x="98.8" y="13.300" style="font-family:'Liberation Sans',sans-serif;font-size:5.800px;fill:#222">3.75</text><path d="M123.0 0V15.800" stroke="#223" stroke-width="0.600"/><text x="123.8" y="13.300" style="font-family:'Liberation Sans',sans-serif;font-size:5.800px;fill:#222">4.12</text><text x="0.800" y="20.6" style="font-family:'Liberation Sans',sans-serif;font-size:5.800px;fill:#222">11.25</text><path d="M1 21.6H16.5" stroke="#334" stroke-width="0.500"/><text x="0.800" y="43.6" style="font-family:'Liberation Sans',sans-serif;font-size:5.800px;fill:#222">10.5</text><path d="M1 44.6H16.5" stroke="#334" stroke-width="0.500"/><text x="0.800" y="66.7" style="font-family:'Liberation Sans',sans-serif;font-size:5.800px;fill:#222">9.75</text><path d="M1 67.7H16.5" stroke="#334" stroke-width="0.500"/><text x="0.800" y="89.7" style="font-family:'Liberation Sans',sans-serif;font-size:5.800px;fill:#222">9</text><path d="M1 90.7H16.5" stroke="#334" stroke-width="0.500"/><text x="0.800" y="112.7" style="font-family:'Liberation Sans',sans-serif;font-size:5.800px;fill:#222">8.25</text><path d="M1 113.7H16.5" stroke="#334" stroke-width="0.500"/><text x="0.800" y="135.8" style="font-family:'Liberation Sans',sans-serif;font-size:5.800px;fill:#222">7.5</text><path d="M1 136.8H16.5" stroke="#334" stroke-width="0.500"/><text x="0.800" y="158.8" style="font-family:'Liberation Sans',sans-serif;font-size:5.800px;fill:#222">6.75</text><path d="M1 159.8H16.5" stroke="#334" stroke-width="0.500"/><text x="0.800" y="181.8" style="font-family:'Liberation Sans',sans-serif;font-size:5.800px;fill:#222">6</text><path d="M1 182.8H16.5" stroke="#334" stroke-width="0.500"/><text x="0.800" y="204.8" style="font-family:'Liberation Sans',sans-serif;font-size:5.800px;fill:#222">5.25</text><path d="M1 205.8H16.5" stroke="#334" stroke-width="0.500"/><text x="0.800" y="227.9" style="font-family:'Liberation Sans',sans-serif;font-size:5.800px;fill:#222">4.5</text><path d="M1 228.9H16.5" stroke="#334" stroke-width="0.500"/><text x="0.800" y="250.9" style="font-family:'Liberation Sans',sans-serif;font-size:5.800px;fill:#222">3.75</text><path d="M1 251.9H16.5" stroke="#334" stroke-width="0.500"/><text x="0.800" y="273.9" style="font-family:'Liberation Sans',sans-serif;font-size:5.800px;fill:#222">3</text><path d="M1 274.9H16.5" stroke="#334" stroke-width="0.500"/><text x="0.800" y="297.0" style="font-family:'Liberation Sans',sans-serif;font-size:5.800px;fill:#222">2.25</text><path d="M1 298.0H16.5" stroke="#334" stroke-width="0.500"/><text x="0.800" y="320.0" style="font-family:'Liberation Sans',sans-serif;font-size:5.800px;fill:#222">1.5</text><path d="M1 321.0H16.5" stroke="#334" stroke-width="0.500"/><text x="0.800" y="343.0" style="font-family:'Liberation Sans',sans-serif;font-size:5.800px;fill:#222">0.75</text><path d="M1 344.0H16.5" stroke="#334" stroke-width="0.500"/><text x="0.800" y="366.1" style="font-family:'Liberation Sans',sans-serif;font-size:5.800px;fill:#222">0</text><path d="M1 367.1H16.5" stroke="#334" stroke-width="0.500"/><text x="0.800" y="389.1" style="font-family:'Liberation Sans',sans-serif;font-size:5.800px;fill:#222">-0.75</text><path d="M1 390.1H16.5" stroke="#334" stroke-width="0.500"/><text x="0.800" y="412.1" style="font-family:'Liberation Sans',sans-serif;font-size:5.800px;fill:#222">-1.5</text><path d="M1 413.1H16.5" stroke="#334" stroke-width="0.500"/></svg>
<svg style="left:786.4px;top:62.4px;overflow:hidden" width="132.9" height="415.4" viewBox="0 0 132.9 415.4"><defs><linearGradient id="gxv0" x1="0" x2="1" y1="0" y2="0"><stop offset="0.0000" stop-color="#bebebe"/><stop offset="0.0075" stop-color="#cccccc"/><stop offset="0.0151" stop-color="#d5d5d5"/><stop offset="0.0226" stop-color="#d6d6d6"/><stop offset="0.0301" stop-color="#d6d6d6"/><stop offset="0.0377" stop-color="#d6d6d6"/><stop offset="0.0452" stop-color="#d6d6d6"/><stop offset="0.0527" stop-color="#d6d6d6"/><stop offset="0.0603" stop-color="#d6d6d6"/><stop offset="0.0678" stop-color="#d6d6d6"/><stop offset="0.0753" stop-color="#d5d5d5"/><stop offset="0.0829" stop-color="#cbcbcb"/><stop offset="0.0904" stop-color="#b6b6b6"/><stop offset="0.0979" stop-color="#979797"/><stop offset="0.1055" stop-color="#6e6e6e"/><stop offset="0.1130" stop-color="#414141"/><stop offset="0.1205" stop-color="#555555"/><stop offset="0.1281" stop-color="#838383"/><stop offset="0.1356" stop-color="#a8a8a8"/><stop offset="0.1431" stop-color="#c3c3c3"/><stop offset="0.1507" stop-color="#d7d7d7"/><stop offset="0.1582" stop-color="#dfdfdf"/><stop offset="0.1657" stop-color="#e0e0e0"/><stop offset="0.1733" stop-color="#e0e0e0"/><stop offset="0.1808" stop-color="#e0e0e0"/><stop offset="0.1883" stop-color="#e0e0e0"/><stop offset="0.1959" stop-color="#e0e0e0"/><stop offset="0.2034" stop-color="#e0e0e0"/><stop offset="0.2109" stop-color="#e0e0e0"/><stop offset="0.2185" stop-color="#dedede"/><stop offset="0.2260" stop-color="#d3d3d3"/><stop offset="0.2335" stop-color="#bcbcbc"/><stop offset="0.2411" stop-color="#9a9a9a"/><stop offset="0.2486" stop-color="#6c6c6c"/><stop offset="0.2561" stop-color="#414141"/><stop offset="0.2637" stop-color="#666666"/><stop offset="0.2712" stop-color="#989898"/><stop offset="0.2787" stop-color="#c0c0c0"/><stop offset="0.2863" stop-color="#dedede"/><stop offset="0.2938" stop-color="#f4f4f4"/><stop offset="0.3013" stop-color="#fdfdfd"/><stop offset="0.3089" stop-color="#ffffff"/><stop offset="0.3164" stop-color="#ffffff"/><stop offset="0.3239" stop-color="#ffffff"/><stop offset="0.3315" stop-color="#ffffff"/><stop offset="0.3390" stop-color="#ffffff"/><stop offset="0.3465" stop-color="#ffffff"/><stop offset="0.3540" stop-color="#ffffff"/><stop offset="0.3616" stop-color="#fdfdfd"/><stop offset="0.3691" stop-color="#f0f0f0"/><stop offset="0.3766" stop-color="#d3d3d3"/><stop offset="0.3842" stop-color="#a9a9a9"/><stop offset="0.3917" stop-color="#727272"/><stop offset="0.3992" stop-color="#393939"/><stop offset="0.4068" stop-color="#131313"/><stop offset="0.4143" stop-color="#000000"/><stop offset="0.4218" stop-color="#000000"/><stop offset="0.4294" stop-color="#000000"/><stop offset="0.4369" stop-color="#000000"/><stop offset="0.4444" stop-color="#000000"/><stop offset="0.4520" stop-color="#000000"/><stop offset="0.4595" stop-color="#000000"/><stop offset="0.4670" stop-color="#000000"/><stop offset="0.4746" stop-color="#000000"/><stop offset="0.4821" stop-color="#000000"/><stop offset="0.4896" stop-color="#000000"/><stop offset="0.4972" stop-color="#000000"/><stop offset="0.5047" stop-color="#000000"/><stop offset="0.5122" stop-color="#000000"/><stop offset="0.5198" stop-color="#000000"/><stop offset="0.5273" stop-color="#000000"/><stop offset="0.5348" stop-color="#000000"/><stop offset="0.5424" stop-color="#000000"/><stop offset="0.5499" stop-color="#000000"/><stop offset="0.5574" stop-color="#000000"/><stop offset="0.5650" stop-color="#000000"/><stop offset="0.5725" stop-color="#000000"/><stop offset="0.5800" stop-color="#000000"/><stop offset="0.5876" stop-color="#000000"/><stop offset="0.5951" stop-color="#000000"/><stop offset="0.6026" stop-color="#0f0f0f"/><stop offset="0.6102" stop-color="#303030"/><stop offset="0.6177" stop-color="#666666"/><stop offset="0.6252" stop-color="#9f9f9f"/><stop offset="0.6328" stop-color="#cccccc"/><stop offset="0.6403" stop-color="#ebebeb"/><stop offset="0.6478" stop-color="#fbfbfb"/><stop offset="0.6554" stop-color="#ffffff"/><stop offset="0.6629" stop-color="#ffffff"/><stop offset="0.6704" stop-color="#ffffff"/><stop offset="0.6780" stop-color="#ffffff"/><stop offset="0.6855" stop-color="#ffffff"/><stop offset="0.6930" stop-color="#ffffff"/><stop offset="0.7006" stop-color="#ffffff"/><stop offset="0.7081" stop-color="#fefefe"/><stop offset="0.7156" stop-color="#f7f7f7"/><stop offset="0.7232" stop-color="#e3e3e3"/><stop offset="0.7307" stop-color="#c6c6c6"/><stop offset="0.7382" stop-color="#a1a1a1"/><stop offset="0.7458" stop-color="#707070"/><stop offset="0.7533" stop-color="#414141"/><stop offset="0.7608" stop-color="#626262"/><stop offset="0.7684" stop-color="#919191"/><stop offset="0.7759" stop-color="#b6b6b6"/><stop offset="0.7834" stop-color="#cfcfcf"/><stop offset="0.7910" stop-color="#dddddd"/><stop offset="0.7985" stop-color="#e0e0e0"/><stop offset="0.8060" stop-color="#e0e0e0"/><stop offset="0.8136" stop-color="#e0e0e0"/><stop offset="0.8211" stop-color="#e0e0e0"/><stop offset="0.8286" stop-color="#e0e0e0"/><stop offset="0.8362" stop-color="#e0e0e0"/><stop offset="0.8437" stop-color="#e0e0e0"/><stop offset="0.8512" stop-color="#e0e0e0"/><stop offset="0.8588" stop-color="#d9d9d9"/><stop offset="0.8663" stop-color="#c8c8c8"/><stop offset="0.8738" stop-color="#aeaeae"/><stop offset="0.8814" stop-color="#8b8b8b"/><stop offset="0.8889" stop-color="#5f5f5f"/><stop offset="0.8964" stop-color="#3c3c3c"/><stop offset="0.9040" stop-color="#646464"/><stop offset="0.9115" stop-color="#909090"/><stop offset="0.9190" stop-color="#b1b1b1"/><stop offset="0.9266" stop-color="#c8c8c8"/><stop offset="0.9341" stop-color="#d4d4d4"/><stop offset="0.9416" stop-color="#d6d6d6"/><stop offset="0.9492" stop-color="#d6d6d6"/><stop offset="0.9567" stop-color="#d6d6d6"/><stop offset="0.9642" stop-color="#d6d6d6"/><stop offset="0.9718" stop-color="#d6d6d6"/><stop offset="0.9793" stop-color="#d6d6d6"/><stop offset="0.9868" stop-color="#d6d6d6"/><stop offset="0.9944" stop-color="#d6d6d6"/></linearGradient><linearGradient id="gzv0" x1="0" x2="0" y1="0" y2="1"><stop offset="0.0000" stop-color="#252525"/><stop offset="0.0068" stop-color="#2b2b2b"/><stop offset="0.0137" stop-color="#313131"/><stop offset="0.0205" stop-color="#363636"/><stop offset="0.0274" stop-color="#3b3b3b"/><stop offset="0.0342" stop-color="#404040"/><stop offset="0.0411" stop-color="#454545"/><stop offset="0.0479" stop-color="#4a4a4a"/><stop offset="0.0548" stop-color="#4e4e4e"/><stop offset="0.0616" stop-color="#515151"/><stop offset="0.0685" stop-color="#545454"/><stop offset="0.0753" stop-color="#575757"/><stop offset="0.0822" stop-color="#595959"/><stop offset="0.0890" stop-color="#5b5b5b"/><stop offset="0.0959" stop-color="#5d5d5d"/><stop offset="0.1027" stop-color="#5e5e5e"/><stop offset="0.1096" stop-color="#5f5f5f"/><stop offset="0.1164" stop-color="#606060"/><stop offset="0.1233" stop-color="#616161"/><stop offset="0.1301" stop-color="#626262"/><stop offset="0.1370" stop-color="#636363"/><stop offset="0.1438" stop-color="#646464"/><stop offset="0.1507" stop-color="#656565"/><stop offset="0.1575" stop-color="#666666"/><stop offset="0.1644" stop-color="#666666"/><stop offset="0.1712" stop-color="#666666"/><stop offset="0.1781" stop-color="#666666"/><stop offset="0.1849" stop-color="#666666"/><stop offset="0.1918" stop-color="#666666"/><stop offset="0.1986" stop-color="#666666"/><stop offset="0.2055" stop-color="#676767"/><stop offset="0.2123" stop-color="#676767"/><stop offset="0.2192" stop-color="#676767"/><stop offset="0.2260" stop-color="#676767"/><stop offset="0.2329" stop-color="#676767"/><stop offset="0.2397" stop-color="#676767"/><stop offset="0.2466" stop-color="#676767"/><stop offset="0.2534" stop-color="#686868"/><stop offset="0.2603" stop-color="#686868"/><stop offset="0.2671" stop-color="#686868"/><stop offset="0.2740" stop-color="#686868"/><stop offset="0.2808" stop-color="#686868"/><stop offset="0.2877" stop-color="#686868"/><stop offset="0.2945" stop-color="#686868"/><stop offset="0.3014" stop-color="#686868"/><stop offset="0.3082" stop-color="#686868"/><stop offset="0.3151" stop-color="#686868"/><stop offset="0.3219" stop-color="#686868"/><stop offset="0.3288" stop-color="#686868"/><stop offset="0.3356" stop-color="#676767"/><stop offset="0.3425" stop-color="#676767"/><stop offset="0.3493" stop-color="#676767"/><stop offset="0.3562" stop-color="#676767"/><stop offset="0.3630" stop-color="#676767"/><stop offset="0.3699" stop-color="#666666"/><stop offset="0.3767" stop-color="#666666"/><stop offset="0.3836" stop-color="#666666"/><stop offset="0.3904" stop-color="#666666"/><stop offset="0.3973" stop-color="#656565"/><stop offset="0.4041" stop-color="#656565"/><stop offset="0.4110" stop-color="#656565"/><stop offset="0.4178" stop-color="#646464"/><stop offset="0.4247" stop-color="#646464"/><stop offset="0.4315" stop-color="#646464"/><stop offset="0.4384" stop-color="#636363"/><stop offset="0.4452" stop-color="#636363"/><stop offset="0.4521" stop-color="#636363"/><stop offset="0.4589" stop-color="#626262"/><stop offset="0.4658" stop-color="#626262"/><stop offset="0.4726" stop-color="#626262"/><stop offset="0.4795" stop-color="#616161"/><stop offset="0.4863" stop-color="#616161"/><stop offset="0.4932" stop-color="#616161"/><stop offset="0.5000" stop-color="#606060"/><stop offset="0.5068" stop-color="#5f5f5f"/><stop offset="0.5137" stop-color="#5e5e5e"/><stop offset="0.5205" stop-color="#5e5e5e"/><stop offset="0.5274" stop-color="#5d5d5d"/><stop offset="0.5342" stop-color="#5c5c5c"/><stop offset="0.5411" stop-color="#5c5c5c"/><stop offset="0.5479" stop-color="#5b5b5b"/><stop offset="0.5548" stop-color="#5b5b5b"/><stop offset="0.5616" stop-color="#5a5a5a"/><stop offset="0.5685" stop-color="#5a5a5a"/><stop offset="0.5753" stop-color="#5a5a5a"/><stop offset="0.5822" stop-color="#595959"/><stop offset="0.5890" stop-color="#595959"/><stop offset="0.5959" stop-color="#595959"/><stop offset="0.6027" stop-color="#585858"/><stop offset="0.6096" stop-color="#585858"/><stop offset="0.6164" stop-color="#575757"/><stop offset="0.6233" stop-color="#575757"/><stop offset="0.6301" stop-color="#565656"/><stop offset="0.6370" stop-color="#565656"/><stop offset="0.6438" stop-color="#555555"/><stop offset="0.6507" stop-color="#545454"/><stop offset="0.6575" stop-color="#535353"/><stop offset="0.6644" stop-color="#535353"/><stop offset="0.6712" stop-color="#525252"/><stop offset="0.6781" stop-color="#515151"/><stop offset="0.6849" stop-color="#515151"/><stop offset="0.6918" stop-color="#505050"/><stop offset="0.6986" stop-color="#4f4f4f"/><stop offset="0.7055" stop-color="#4e4e4e"/><stop offset="0.7123" stop-color="#4d4d4d"/><stop offset="0.7192" stop-color="#4c4c4c"/><stop offset="0.7260" stop-color="#4b4b4b"/><stop offset="0.7329" stop-color="#4a4a4a"/><stop offset="0.7397" stop-color="#494949"/><stop offset="0.7466" stop-color="#474747"/><stop offset="0.7534" stop-color="#464646"/><stop offset="0.7603" stop-color="#454545"/><stop offset="0.7671" stop-color="#444444"/><stop offset="0.7740" stop-color="#434343"/><stop offset="0.7808" stop-color="#424242"/><stop offset="0.7877" stop-color="#414141"/><stop offset="0.7945" stop-color="#414141"/><stop offset="0.8014" stop-color="#404040"/><stop offset="0.8082" stop-color="#404040"/><stop offset="0.8151" stop-color="#3f3f3f"/><stop offset="0.8219" stop-color="#3e3e3e"/><stop offset="0.8288" stop-color="#3e3e3e"/><stop offset="0.8356" stop-color="#3d3d3d"/><stop offset="0.8425" stop-color="#3d3d3d"/><stop offset="0.8493" stop-color="#3c3c3c"/><stop offset="0.8562" stop-color="#3b3b3b"/><stop offset="0.8630" stop-color="#3b3b3b"/><stop offset="0.8699" stop-color="#3a3a3a"/><stop offset="0.8767" stop-color="#393939"/><stop offset="0.8836" stop-color="#393939"/><stop offset="0.8904" stop-color="#383838"/><stop offset="0.8973" stop-color="#373737"/><stop offset="0.9041" stop-color="#373737"/><stop offset="0.9110" stop-color="#363636"/><stop offset="0.9178" stop-color="#353535"/><stop offset="0.9247" stop-color="#353535"/><stop offset="0.9315" stop-color="#343434"/><stop offset="0.9384" stop-color="#343434"/><stop offset="0.9452" stop-color="#333333"/><stop offset="0.9521" stop-color="#333333"/><stop offset="0.9589" stop-color="#323232"/><stop offset="0.9658" stop-color="#313131"/><stop offset="0.9726" stop-color="#313131"/><stop offset="0.9795" stop-color="#303030"/><stop offset="0.9863" stop-color="#303030"/><stop offset="0.9932" stop-color="#2f2f2f"/><stop offset="1.0000" stop-color="#2f2f2f"/></linearGradient><linearGradient id="gxv1" x1="0" x2="1" y1="0" y2="0"><stop offset="0.0000" stop-color="#040404"/><stop offset="0.0312" stop-color="#151515"/><stop offset="0.0625" stop-color="#363636"/><stop offset="0.0938" stop-color="#5d5d5d"/><stop offset="0.1250" stop-color="#7e7e7e"/><stop offset="0.1562" stop-color="#989898"/><stop offset="0.1875" stop-color="#aeaeae"/><stop offset="0.2188" stop-color="#c0c0c0"/><stop offset="0.2500" stop-color="#cfcfcf"/><stop offset="0.2812" stop-color="#dcdcdc"/><stop offset="0.3125" stop-color="#e5e5e5"/><stop offset="0.3438" stop-color="#ededed"/><stop offset="0.3750" stop-color="#f3f3f3"/><stop offset="0.4062" stop-color="#f8f8f8"/><stop offset="0.4375" stop-color="#fcfcfc"/><stop offset="0.4688" stop-color="#fefefe"/><stop offset="0.5000" stop-color="#fefefe"/><stop offset="0.5312" stop-color="#fefefe"/><stop offset="0.5625" stop-color="#fcfcfc"/><stop offset="0.5938" stop-color="#f9f9f9"/><stop offset="0.6250" stop-color="#f4f4f4"/><stop offset="0.6562" stop-color="#eeeeee"/><stop offset="0.6875" stop-color="#e7e7e7"/><stop offset="0.7188" stop-color="#dedede"/><stop offset="0.7500" stop-color="#d2d2d2"/><stop offset="0.7812" stop-color="#c4c4c4"/><stop offset="0.8125" stop-color="#b2b2b2"/><stop offset="0.8438" stop-color="#9d9d9d"/><stop offset="0.8750" stop-color="#838383"/><stop offset="0.9062" stop-color="#646464"/><stop offset="0.9375" stop-color="#3e3e3e"/><stop offset="0.9688" stop-color="#1a1a1a"/><stop offset="1.0000" stop-color="#060606"/></linearGradient><linearGradient id="gzv1" x1="0" x2="0" y1="0" y2="1"><stop offset="0.0000" stop-color="#424242"/><stop offset="0.0068" stop-color="#414141"/><stop offset="0.0137" stop-color="#414141"/><stop offset="0.0205" stop-color="#414141"/><stop offset="0.0274" stop-color="#414141"/><stop offset="0.0342" stop-color="#424242"/><stop offset="0.0411" stop-color="#464646"/><stop offset="0.0479" stop-color="#4a4a4a"/><stop offset="0.0548" stop-color="#4e4e4e"/><stop offset="0.0616" stop-color="#525252"/><stop offset="0.0685" stop-color="#575757"/><stop offset="0.0753" stop-color="#5d5d5d"/><stop offset="0.0822" stop-color="#626262"/><stop offset="0.0890" stop-color="#666666"/><stop offset="0.0959" stop-color="#6e6e6e"/><stop offset="0.1027" stop-color="#747474"/><stop offset="0.1096" stop-color="#787878"/><stop offset="0.1164" stop-color="#818181"/><stop offset="0.1233" stop-color="#888888"/><stop offset="0.1301" stop-color="#909090"/><stop offset="0.1370" stop-color="#979797"/><stop offset="0.1438" stop-color="#9e9e9e"/><stop offset="0.1507" stop-color="#a4a4a4"/><stop offset="0.1575" stop-color="#aaaaaa"/><stop offset="0.1644" stop-color="#b0b0b0"/><stop offset="0.1712" stop-color="#b6b6b6"/><stop offset="0.1781" stop-color="#bbbbbb"/><stop offset="0.1849" stop-color="#c1c1c1"/><stop offset="0.1918" stop-color="#c6c6c6"/><stop offset="0.1986" stop-color="#cbcbcb"/><stop offset="0.2055" stop-color="#cfcfcf"/><stop offset="0.2123" stop-color="#d3d3d3"/><stop offset="0.2192" stop-color="#d8d8d8"/><stop offset="0.2260" stop-color="#dcdcdc"/><stop offset="0.2329" stop-color="#e0e0e0"/><stop offset="0.2397" stop-color="#e3e3e3"/><stop offset="0.2466" stop-color="#e6e6e6"/><stop offset="0.2534" stop-color="#e9e9e9"/><stop offset="0.2603" stop-color="#ececec"/><stop offset="0.2671" stop-color="#eeeeee"/><stop offset="0.2740" stop-color="#f0f0f0"/><stop offset="0.2808" stop-color="#f2f2f2"/><stop offset="0.2877" stop-color="#f3f3f3"/><stop offset="0.2945" stop-color="#f3f3f3"/><stop offset="0.3014" stop-color="#f3f3f3"/><stop offset="0.3082" stop-color="#f2f2f2"/><stop offset="0.3151" stop-color="#f2f2f2"/><stop offset="0.3219" stop-color="#f1f1f1"/><stop offset="0.3288" stop-color="#f0f0f0"/><stop offset="0.3356" stop-color="#f0f0f0"/><stop offset="0.3425" stop-color="#efefef"/><stop offset="0.3493" stop-color="#eeeeee"/><stop offset="0.3562" stop-color="#ededed"/><stop offset="0.3630" stop-color="#ececec"/><stop offset="0.3699" stop-color="#eaeaea"/><stop offset="0.3767" stop-color="#e9e9e9"/><stop offset="0.3836" stop-color="#e7e7e7"/><stop offset="0.3904" stop-color="#e6e6e6"/><stop offset="0.3973" stop-color="#e4e4e4"/><stop offset="0.4041" stop-color="#e2e2e2"/><stop offset="0.4110" stop-color="#e0e0e0"/><stop offset="0.4178" stop-color="#dfdfdf"/><stop offset="0.4247" stop-color="#dddddd"/><stop offset="0.4315" stop-color="#dcdcdc"/><stop offset="0.4384" stop-color="#dbdbdb"/><stop offset="0.4452" stop-color="#d9d9d9"/><stop offset="0.4521" stop-color="#d7d7d7"/><stop offset="0.4589" stop-color="#d5d5d5"/><stop offset="0.4658" stop-color="#d3d3d3"/><stop offset="0.4726" stop-color="#d1d1d1"/><stop offset="0.4795" stop-color="#cfcfcf"/><stop offset="0.4863" stop-color="#cdcdcd"/><stop offset="0.4932" stop-color="#cbcbcb"/><stop offset="0.5000" stop-color="#cacaca"/><stop offset="0.5068" stop-color="#c8c8c8"/><stop offset="0.5137" stop-color="#c6c6c6"/><stop offset="0.5205" stop-color="#c4c4c4"/><stop offset="0.5274" stop-color="#c2c2c2"/><stop offset="0.5342" stop-color="#c0c0c0"/><stop offset="0.5411" stop-color="#bebebe"/><stop offset="0.5479" stop-color="#bcbcbc"/><stop offset="0.5548" stop-color="#bababa"/><stop offset="0.5616" stop-color="#b7b7b7"/><stop offset="0.5685" stop-color="#b5b5b5"/><stop offset="0.5753" stop-color="#b3b3b3"/><stop offset="0.5822" stop-color="#b1b1b1"/><stop offset="0.5890" stop-color="#afafaf"/><stop offset="0.5959" stop-color="#aeaeae"/><stop offset="0.6027" stop-color="#acacac"/><stop offset="0.6096" stop-color="#aaaaaa"/><stop offset="0.6164" stop-color="#a8a8a8"/><stop offset="0.6233" stop-color="#a6a6a6"/><stop offset="0.6301" stop-color="#a4a4a4"/><stop offset="0.6370" stop-color="#a2a2a2"/><stop offset="0.6438" stop-color="#a0a0a0"/><stop offset="0.6507" stop-color="#9e9e9e"/><stop offset="0.6575" stop-color="#9d9d9d"/><stop offset="0.6644" stop-color="#9b9b9b"/><stop offset="0.6712" stop-color="#9a9a9a"/><stop offset="0.6781" stop-color="#989898"/><stop offset="0.6849" stop-color="#969696"/><stop offset="0.6918" stop-color="#959595"/><stop offset="0.6986" stop-color="#939393"/><stop offset="0.7055" stop-color="#919191"/><stop offset="0.7123" stop-color="#8f8f8f"/><stop offset="0.7192" stop-color="#8d8d8d"/><stop offset="0.7260" stop-color="#8b8b8b"/><stop offset="0.7329" stop-color="#898989"/><stop offset="0.7397" stop-color="#878787"/><stop offset="0.7466" stop-color="#858585"/><stop offset="0.7534" stop-color="#848484"/><stop offset="0.7603" stop-color="#838383"/><stop offset="0.7671" stop-color="#828282"/><stop offset="0.7740" stop-color="#808080"/><stop offset="0.7808" stop-color="#7f7f7f"/><stop offset="0.7877" stop-color="#7e7e7e"/><stop offset="0.7945" stop-color="#7c7c7c"/><stop offset="0.8014" stop-color="#7b7b7b"/><stop offset="0.8082" stop-color="#797979"/><stop offset="0.8151" stop-color="#777777"/><stop offset="0.8219" stop-color="#757575"/><stop offset="0.8288" stop-color="#747474"/><stop offset="0.8356" stop-color="#727272"/><stop offset="0.8425" stop-color="#707070"/><stop offset="0.8493" stop-color="#6e6e6e"/><stop offset="0.8562" stop-color="#6c6c6c"/><stop offset="0.8630" stop-color="#6a6a6a"/><stop offset="0.8699" stop-color="#686868"/><stop offset="0.8767" stop-color="#666666"/><stop offset="0.8836" stop-color="#656565"/><stop offset="0.8904" stop-color="#646464"/><stop offset="0.8973" stop-color="#626262"/><stop offset="0.9041" stop-color="#616161"/><stop offset="0.9110" stop-color="#606060"/><stop offset="0.9178" stop-color="#5f5f5f"/><stop offset="0.9247" stop-color="#5d5d5d"/><stop offset="0.9315" stop-color="#5c5c5c"/><stop offset="0.9384" stop-color="#5a5a5a"/><stop offset="0.9452" stop-color="#595959"/><stop offset="0.9521" stop-color="#575757"/><stop offset="0.9589" stop-color="#565656"/><stop offset="0.9658" stop-color="#555555"/><stop offset="0.9726" stop-color="#545454"/><stop offset="0.9795" stop-color="#535353"/><stop offset="0.9863" stop-color="#525252"/><stop offset="0.9932" stop-color="#505050"/><stop offset="1.0000" stop-color="#4f4f4f"/></linearGradient><linearGradient id="gxv2" x1="0" x2="1" y1="0" y2="0"><stop offset="0.0000" stop-color="#040404"/><stop offset="0.0312" stop-color="#131313"/><stop offset="0.0625" stop-color="#333333"/><stop offset="0.0938" stop-color="#585858"/><stop offset="0.1250" stop-color="#757575"/><stop offset="0.1562" stop-color="#8d8d8d"/><stop offset="0.1875" stop-color="#a0a0a0"/><stop offset="0.2188" stop-color="#b0b0b0"/><stop offset="0.2500" stop-color="#bebebe"/><stop offset="0.2812" stop-color="#cbcbcb"/><stop offset="0.3125" stop-color="#d7d7d7"/><stop offset="0.3438" stop-color="#e2e2e2"/><stop offset="0.3750" stop-color="#ececec"/><stop offset="0.4062" stop-color="#f4f4f4"/><stop offset="0.4375" stop-color="#f9f9f9"/><stop offset="0.4688" stop-color="#fdfdfd"/><stop offset="0.5000" stop-color="#fefefe"/><stop offset="0.5312" stop-color="#fdfdfd"/><stop offset="0.5625" stop-color="#fafafa"/><stop offset="0.5938" stop-color="#f5f5f5"/><stop offset="0.6250" stop-color="#ededed"/><stop offset="0.6562" stop-color="#e4e4e4"/><stop offset="0.6875" stop-color="#dadada"/><stop offset="0.7188" stop-color="#cecece"/><stop offset="0.7500" stop-color="#c1c1c1"/><stop offset="0.7812" stop-color="#b3b3b3"/><stop offset="0.8125" stop-color="#a3a3a3"/><stop offset="0.8438" stop-color="#919191"/><stop offset="0.8750" stop-color="#7b7b7b"/><stop offset="0.9062" stop-color="#5e5e5e"/><stop offset="0.9375" stop-color="#3a3a3a"/><stop offset="0.9688" stop-color="#181818"/><stop offset="1.0000" stop-color="#060606"/></linearGradient><linearGradient id="gzv2" x1="0" x2="0" y1="0" y2="1"><stop offset="0.0000" stop-color="#606060"/><stop offset="0.0068" stop-color="#5f5f5f"/><stop offset="0.0137" stop-color="#5e5e5e"/><stop offset="0.0205" stop-color="#5f5f5f"/><stop offset="0.0274" stop-color="#5f5f5f"/><stop offset="0.0342" stop-color="#606060"/><stop offset="0.0411" stop-color="#676767"/><stop offset="0.0479" stop-color="#6c6c6c"/><stop offset="0.0548" stop-color="#727272"/><stop offset="0.0616" stop-color="#787878"/><stop offset="0.0685" stop-color="#7f7f7f"/><stop offset="0.0753" stop-color="#888888"/><stop offset="0.0822" stop-color="#8f8f8f"/><stop offset="0.0890" stop-color="#959595"/><stop offset="0.0959" stop-color="#a0a0a0"/><stop offset="0.1027" stop-color="#a9a9a9"/><stop offset="0.1096" stop-color="#b0b0b0"/><stop offset="0.1164" stop-color="#b6b6b6"/><stop offset="0.1233" stop-color="#bbbbbb"/><stop offset="0.1301" stop-color="#c0c0c0"/><stop offset="0.1370" stop-color="#c5c5c5"/><stop offset="0.1438" stop-color="#c9c9c9"/><stop offset="0.1507" stop-color="#cdcdcd"/><stop offset="0.1575" stop-color="#d1d1d1"/><stop offset="0.1644" stop-color="#d4d4d4"/><stop offset="0.1712" stop-color="#d8d8d8"/><stop offset="0.1781" stop-color="#dbdbdb"/><stop offset="0.1849" stop-color="#dfdfdf"/><stop offset="0.1918" stop-color="#e2e2e2"/><stop offset="0.1986" stop-color="#e4e4e4"/><stop offset="0.2055" stop-color="#e6e6e6"/><stop offset="0.2123" stop-color="#e8e8e8"/><stop offset="0.2192" stop-color="#eaeaea"/><stop offset="0.2260" stop-color="#ececec"/><stop offset="0.2329" stop-color="#eeeeee"/><stop offset="0.2397" stop-color="#efefef"/><stop offset="0.2466" stop-color="#f0f0f0"/><stop offset="0.2534" stop-color="#f1f1f1"/><stop offset="0.2603" stop-color="#f1f1f1"/><stop offset="0.2671" stop-color="#f2f2f2"/><stop offset="0.2740" stop-color="#f2f2f2"/><stop offset="0.2808" stop-color="#f2f2f2"/><stop offset="0.2877" stop-color="#f3f3f3"/><stop offset="0.2945" stop-color="#f3f3f3"/><stop offset="0.3014" stop-color="#f3f3f3"/><stop offset="0.3082" stop-color="#f2f2f2"/><stop offset="0.3151" stop-color="#f2f2f2"/><stop offset="0.3219" stop-color="#f1f1f1"/><stop offset="0.3288" stop-color="#f0f0f0"/><stop offset="0.3356" stop-color="#f0f0f0"/><stop offset="0.3425" stop-color="#efefef"/><stop offset="0.3493" stop-color="#eeeeee"/><stop offset="0.3562" stop-color="#ededed"/><stop offset="0.3630" stop-color="#ececec"/><stop offset="0.3699" stop-color="#eaeaea"/><stop offset="0.3767" stop-color="#e9e9e9"/><stop offset="0.3836" stop-color="#e7e7e7"/><stop offset="0.3904" stop-color="#e6e6e6"/><stop offset="0.3973" stop-color="#e4e4e4"/><stop offset="0.4041" stop-color="#e2e2e2"/><stop offset="0.4110" stop-color="#e0e0e0"/><stop offset="0.4178" stop-color="#dfdfdf"/><stop offset="0.4247" stop-color="#dddddd"/><stop offset="0.4315" stop-color="#dcdcdc"/><stop offset="0.4384" stop-color="#dbdbdb"/><stop offset="0.4452" stop-color="#d9d9d9"/><stop offset="0.4521" stop-color="#d7d7d7"/><stop offset="0.4589" stop-color="#d5d5d5"/><stop offset="0.4658" stop-color="#d3d3d3"/><stop offset="0.4726" stop-color="#d1d1d1"/><stop offset="0.4795" stop-color="#cfcfcf"/><stop offset="0.4863" stop-color="#cdcdcd"/><stop offset="0.4932" stop-color="#cbcbcb"/><stop offset="0.5000" stop-color="#cacaca"/><stop offset="0.5068" stop-color="#c8c8c8"/><stop offset="0.5137" stop-color="#c6c6c6"/><stop offset="0.5205" stop-color="#c4c4c4"/><stop offset="0.5274" stop-color="#c2c2c2"/><stop offset="0.5342" stop-color="#c0c0c0"/><stop offset="0.5411" stop-color="#bebebe"/><stop offset="0.5479" stop-color="#bcbcbc"/><stop offset="0.5548" stop-color="#bababa"/><stop offset="0.5616" stop-color="#b7b7b7"/><stop offset="0.5685" stop-color="#b5b5b5"/><stop offset="0.5753" stop-color="#b3b3b3"/><stop offset="0.5822" stop-color="#b1b1b1"/><stop offset="0.5890" stop-color="#afafaf"/><stop offset="0.5959" stop-color="#aeaeae"/><stop offset="0.6027" stop-color="#acacac"/><stop offset="0.6096" stop-color="#aaaaaa"/><stop offset="0.6164" stop-color="#a8a8a8"/><stop offset="0.6233" stop-color="#a6a6a6"/><stop offset="0.6301" stop-color="#a4a4a4"/><stop offset="0.6370" stop-color="#a2a2a2"/><stop offset="0.6438" stop-color="#a0a0a0"/><stop offset="0.6507" stop-color="#9e9e9e"/><stop offset="0.6575" stop-color="#9d9d9d"/><stop offset="0.6644" stop-color="#9b9b9b"/><stop offset="0.6712" stop-color="#9a9a9a"/><stop offset="0.6781" stop-color="#989898"/><stop offset="0.6849" stop-color="#969696"/><stop offset="0.6918" stop-color="#959595"/><stop offset="0.6986" stop-color="#939393"/><stop offset="0.7055" stop-color="#919191"/><stop offset="0.7123" stop-color="#8f8f8f"/><stop offset="0.7192" stop-color="#8d8d8d"/><stop offset="0.7260" stop-color="#8b8b8b"/><stop offset="0.7329" stop-color="#898989"/><stop offset="0.7397" stop-color="#878787"/><stop offset="0.7466" stop-color="#858585"/><stop offset="0.7534" stop-color="#848484"/><stop offset="0.7603" stop-color="#838383"/><stop offset="0.7671" stop-color="#828282"/><stop offset="0.7740" stop-color="#808080"/><stop offset="0.7808" stop-color="#7f7f7f"/><stop offset="0.7877" stop-color="#7e7e7e"/><stop offset="0.7945" stop-color="#7c7c7c"/><stop offset="0.8014" stop-color="#7b7b7b"/><stop offset="0.8082" stop-color="#797979"/><stop offset="0.8151" stop-color="#777777"/><stop offset="0.8219" stop-color="#757575"/><stop offset="0.8288" stop-color="#747474"/><stop offset="0.8356" stop-color="#727272"/><stop offset="0.8425" stop-color="#707070"/><stop offset="0.8493" stop-color="#6e6e6e"/><stop offset="0.8562" stop-color="#6c6c6c"/><stop offset="0.8630" stop-color="#6a6a6a"/><stop offset="0.8699" stop-color="#686868"/><stop offset="0.8767" stop-color="#666666"/><stop offset="0.8836" stop-color="#656565"/><stop offset="0.8904" stop-color="#646464"/><stop offset="0.8973" stop-color="#626262"/><stop offset="0.9041" stop-color="#616161"/><stop offset="0.9110" stop-color="#606060"/><stop offset="0.9178" stop-color="#5f5f5f"/><stop offset="0.9247" stop-color="#5d5d5d"/><stop offset="0.9315" stop-color="#5c5c5c"/><stop offset="0.9384" stop-color="#5a5a5a"/><stop offset="0.9452" stop-color="#595959"/><stop offset="0.9521" stop-color="#575757"/><stop offset="0.9589" stop-color="#565656"/><stop offset="0.9658" stop-color="#555555"/><stop offset="0.9726" stop-color="#545454"/><stop offset="0.9795" stop-color="#535353"/><stop offset="0.9863" stop-color="#525252"/><stop offset="0.9932" stop-color="#505050"/><stop offset="1.0000" stop-color="#4f4f4f"/></linearGradient></defs><rect width="132.9" height="415.4" fill="#00004c"/><g filter="url(#jet)" style="isolation:isolate"><rect x="0" y="61.1" width="132.9" height="292.8" fill="#000"/><g style="isolation:isolate"><rect x="0.00" y="61.1" width="132.75" height="292.8" fill="url(#gxv0)"/><rect x="0.00" y="61.1" width="132.75" height="292.8" fill="url(#gzv0)" style="mix-blend-mode:multiply"/></g><g style="isolation:isolate;mix-blend-mode:lighten"><rect x="51.00" y="61.1" width="32.00" height="292.8" fill="url(#gxv1)"/><rect x="51.00" y="61.1" width="32.00" height="292.8" fill="url(#gzv1)" style="mix-blend-mode:multiply"/></g><g style="isolation:isolate;mix-blend-mode:lighten"><rect x="51.00" y="61.1" width="32.00" height="292.8" fill="url(#gxv2)"/><rect x="51.00" y="61.1" width="32.00" height="292.8" fill="url(#gzv2)" style="mix-blend-mode:multiply"/></g></g><path d="M67.1 15.800V61.1M67.1 353.9V415.4" stroke="#167e6c" stroke-width="1"/><path d="M67.1 61.1V353.9" stroke="#7fb0f0" stroke-width="0.700" opacity=".4"/><rect x="15.5" y="0" width="117.4" height="15.800" fill="#fff" fill-opacity=".43"/><rect x="0" y="15.800" width="15.5" height="399.6" fill="#fff" fill-opacity=".43"/><defs><linearGradient id="glv" x1="0" x2="0" y1="0" y2="1"><stop offset="0" stop-color="#8a8ac8"/><stop offset=".35" stop-color="#8080b4"/><stop offset=".6" stop-color="#808094"/><stop offset="1" stop-color="#80808c"/></linearGradient></defs><path d="M67.1 0V15.800" stroke="#9a9aa8" stroke-width="0.800" opacity=".6"/><path d="M36.4 0V15.800" stroke="#223" stroke-width="0.600"/><text x="37.2" y="13.300" style="font-family:'Liberation Sans',sans-serif;font-size:5.800px;fill:#222">1.875</text><path d="M57.2 8.5V15.800" stroke="#223" stroke-width="0.600"/><text x="58.0" y="13.300" style="font-family:'Liberation Sans',sans-serif;font-size:5.800px;fill:#222">2.25</text><path d="M79.2 8.5V15.800" stroke="#223" stroke-width="0.600"/><text x="80.0" y="13.300" style="font-family:'Liberation Sans',sans-serif;font-size:5.800px;fill:#222">2.625</text><path d="M101.8 0V15.800" stroke="#223" stroke-width="0.600"/><text x="102.6" y="13.300" style="font-family:'Liberation Sans',sans-serif;font-size:5.800px;fill:#222">3</text><path d="M122.8 8.5V15.800" stroke="#223" stroke-width="0.600"/><text x="123.6" y="13.300" style="font-family:'Liberation Sans',sans-serif;font-size:5.800px;fill:#222">3.37</text><text x="0.800" y="22.8" style="font-family:'Liberation Sans',sans-serif;font-size:5.800px;fill:#222">11.25</text><path d="M1 23.8H16.5" stroke="#334" stroke-width="0.500"/><text x="0.800" y="44.8" style="font-family:'Liberation Sans',sans-serif;font-size:5.800px;fill:#222">10.5</text><path d="M1 45.8H16.5" stroke="#334" stroke-width="0.500"/><text x="0.800" y="66.7" style="font-family:'Liberation Sans',sans-serif;font-size:5.800px;fill:#222">9.75</text><path d="M1 67.7H16.5" stroke="#334" stroke-width="0.500"/><text x="0.800" y="88.7" style="font-family:'Liberation Sans',sans-serif;font-size:5.800px;fill:#222">9</text><path d="M1 89.7H16.5" stroke="#334" stroke-width="0.500"/><text x="0.800" y="110.6" style="font-family:'Liberation Sans',sans-serif;font-size:5.800px;fill:#222">8.25</text><path d="M1 111.6H16.5" stroke="#334" stroke-width="0.500"/><text x="0.800" y="132.5" style="font-family:'Liberation Sans',sans-serif;font-size:5.800px;fill:#222">7.5</text><path d="M1 133.5H16.5" stroke="#334" stroke-width="0.500"/><text x="0.800" y="154.5" style="font-family:'Liberation Sans',sans-serif;font-size:5.800px;fill:#222">6.75</text><path d="M1 155.5H16.5" stroke="#334" stroke-width="0.500"/><text x="0.800" y="176.5" style="font-family:'Liberation Sans',sans-serif;font-size:5.800px;fill:#222">6</text><path d="M1 177.5H16.5" stroke="#334" stroke-width="0.500"/><text x="0.800" y="198.4" style="font-family:'Liberation Sans',sans-serif;font-size:5.800px;fill:#222">5.25</text><path d="M1 199.4H16.5" stroke="#334" stroke-width="0.500"/><text x="0.800" y="220.3" style="font-family:'Liberation Sans',sans-serif;font-size:5.800px;fill:#222">4.5</text><path d="M1 221.3H16.5" stroke="#334" stroke-width="0.500"/><text x="0.800" y="242.3" style="font-family:'Liberation Sans',sans-serif;font-size:5.800px;fill:#222">3.75</text><path d="M1 243.3H16.5" stroke="#334" stroke-width="0.500"/><text x="0.800" y="264.2" style="font-family:'Liberation Sans',sans-serif;font-size:5.800px;fill:#222">3</text><path d="M1 265.2H16.5" stroke="#334" stroke-width="0.500"/><text x="0.800" y="286.2" style="font-family:'Liberation Sans',sans-serif;font-size:5.800px;fill:#222">2.25</text><path d="M1 287.2H16.5" stroke="#334" stroke-width="0.500"/><text x="0.800" y="308.1" style="font-family:'Liberation Sans',sans-serif;font-size:5.800px;fill:#222">1.5</text><path d="M1 309.1H16.5" stroke="#334" stroke-width="0.500"/><text x="0.800" y="330.1" style="font-family:'Liberation Sans',sans-serif;font-size:5.800px;fill:#222">0.75</text><path d="M1 331.1H16.5" stroke="#334" stroke-width="0.500"/><text x="0.800" y="352.1" style="font-family:'Liberation Sans',sans-serif;font-size:5.800px;fill:#222">0</text><path d="M1 353.1H16.5" stroke="#334" stroke-width="0.500"/><text x="0.800" y="374.0" style="font-family:'Liberation Sans',sans-serif;font-size:5.800px;fill:#222">-0.75</text><path d="M1 375.0H16.5" stroke="#334" stroke-width="0.500"/><text x="0.800" y="395.9" style="font-family:'Liberation Sans',sans-serif;font-size:5.800px;fill:#222">-1.5</text><path d="M1 396.9H16.5" stroke="#334" stroke-width="0.500"/><text x="0.800" y="417.9" style="font-family:'Liberation Sans',sans-serif;font-size:5.800px;fill:#222">-2.25</text><path d="M1 418.9H16.5" stroke="#334" stroke-width="0.500"/></svg>
<svg style="left:603px;top:234px" width="14" height="70" viewBox="-7 -7 14 70" fill="none" stroke="#f4f4f4" stroke-width="0.900"><g transform="translate(0 0)"><path d="M-5.500 -5.500h6v6h-6z" stroke-width="0.800"/><circle cx="1.600" cy="1.600" r="2.800" stroke-width="1"/><path d="M3.700 3.700 6 6" stroke-width="1.400"/></g><g transform="translate(0 18.69999999999999)"><circle cx="-0.800" cy="-1" r="3.900" stroke-width="1.200"/><path d="M2.100 1.900 5.600 5.400" stroke-width="1.700"/></g><g transform="translate(0 37)"><path d="M0 -5.800v11.600M-5.800 0h11.600M-1.700 -4 0 -5.800l1.700 1.800M-1.700 4 0 5.800l1.700-1.800M-4 -1.700-5.800 0l1.800 1.700M4 -1.700 5.800 0 4 1.700" stroke-width="0.900"/></g><g transform="translate(0 54)"><path d="M-4.600 -4.600l2.200 2.200M-4.600 -4.600h2.200M-4.600 -4.600v2.200M4.600 -4.600l-2.200 2.200M4.600 -4.600h-2.200M4.600 -4.600v2.200M-4.600 4.600l2.200-2.200M-4.600 4.600h2.200M-4.600 4.600v-2.200M4.600 4.600l-2.200-2.200M4.600 4.600h-2.200M4.600 4.600v-2.200" stroke-width="1"/></g></svg>
<svg style="left:902.7px;top:234.8px" width="14" height="70" viewBox="-7 -7 14 70" fill="none" stroke="#f4f4f4" stroke-width="0.900"><g transform="translate(0 0.0)"><path d="M-5.500 -5.500h6v6h-6z" stroke-width="0.800"/><circle cx="1.600" cy="1.600" r="2.800" stroke-width="1"/><path d="M3.700 3.700 6 6" stroke-width="1.400"/></g><g transform="translate(0 18.399999999999977)"><circle cx="-0.800" cy="-1" r="3.900" stroke-width="1.200"/><path d="M2.100 1.900 5.600 5.400" stroke-width="1.700"/></g><g transform="translate(0 35.5)"><path d="M0 -5.800v11.600M-5.800 0h11.600M-1.700 -4 0 -5.800l1.700 1.800M-1.700 4 0 5.800l1.700-1.800M-4 -1.700-5.800 0l1.800 1.700M4 -1.700 5.800 0 4 1.700" stroke-width="0.900"/></g><g transform="translate(0 53.19999999999999)"><path d="M-4.600 -4.600l2.200 2.200M-4.600 -4.600h2.200M-4.600 -4.600v2.200M4.600 -4.600l-2.200 2.200M4.600 -4.600h-2.200M4.600 -4.600v2.200M-4.600 4.600l2.200-2.200M-4.600 4.600h2.200M-4.600 4.600v-2.200M4.600 4.600l-2.200-2.200M4.600 4.600h-2.200M4.600 4.600v-2.200" stroke-width="1"/></g></svg>
</body></html>
